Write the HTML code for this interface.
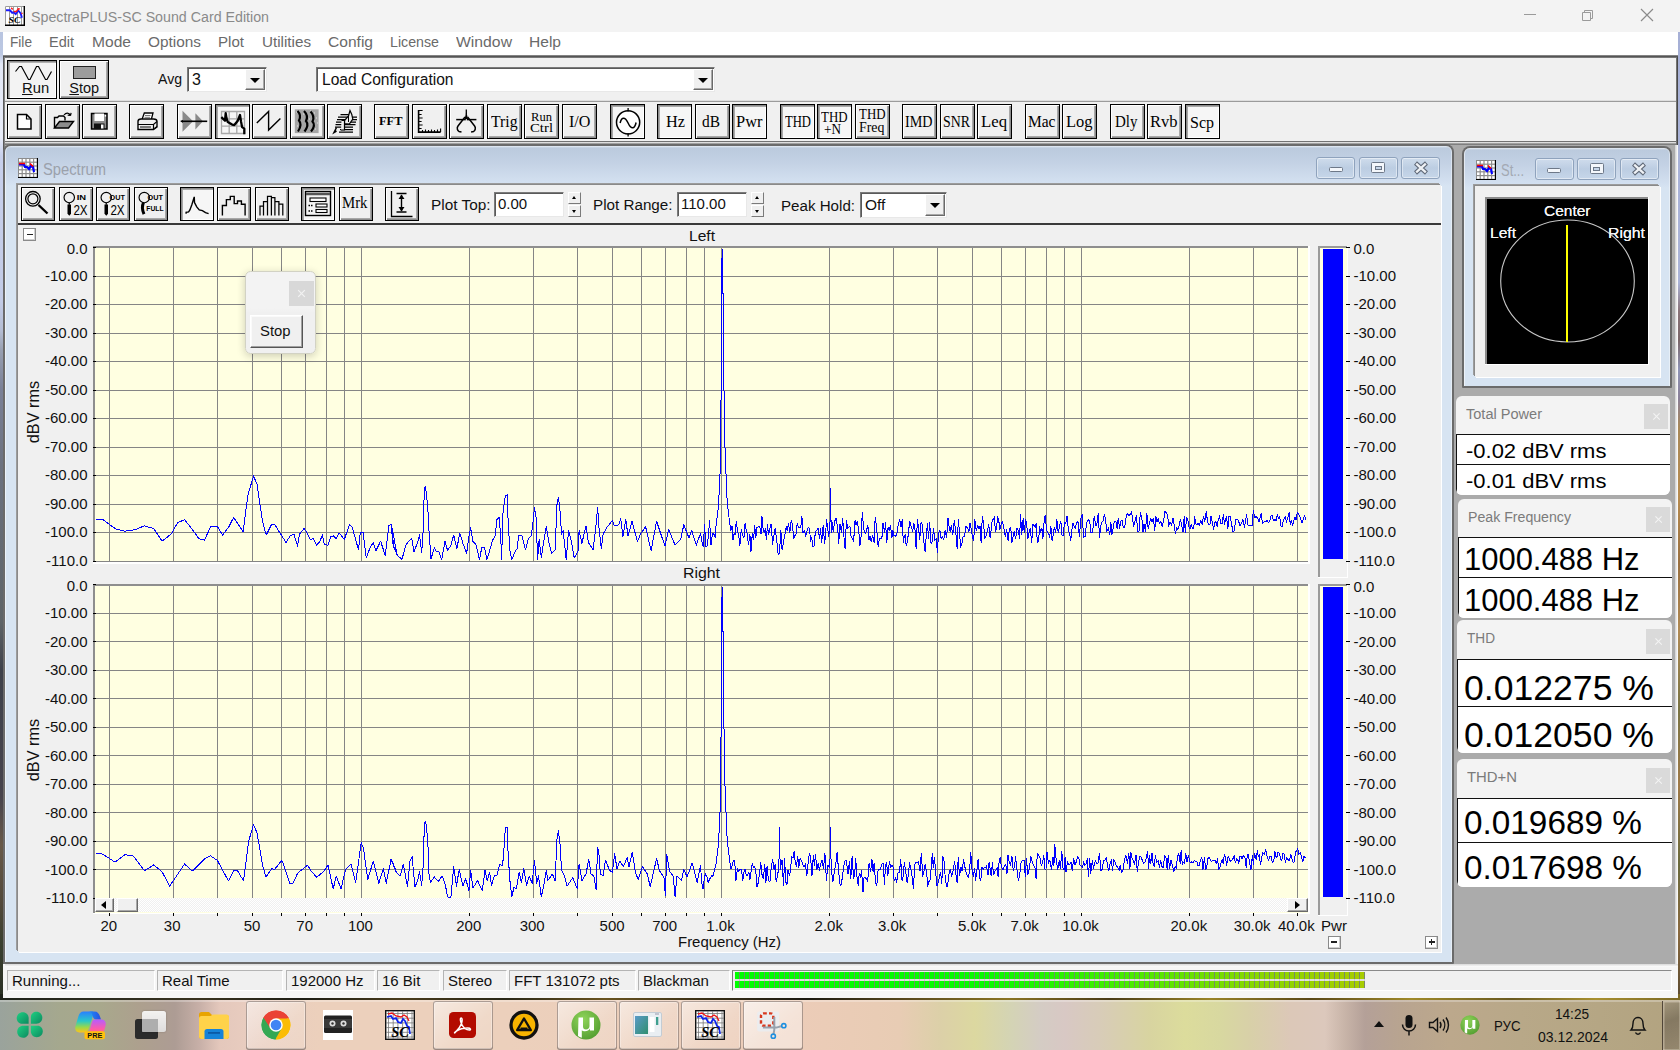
<!DOCTYPE html><html><head><meta charset="utf-8"><title>SpectraPLUS-SC</title><style>
*{margin:0;padding:0;box-sizing:border-box}
html,body{width:1680px;height:1050px;overflow:hidden}
body{position:relative;font-family:"Liberation Sans",sans-serif;background:#2a2a22;color:#000}
.a{position:absolute}
.t{position:absolute;white-space:nowrap;line-height:1}
.sx{display:inline-block;transform-origin:0 50%}
.tb{position:absolute;width:35px;height:35px;border:1px solid #000;background:#f0f0f0;box-shadow:inset 1px 1px 0 #fff,inset -1px -1px 0 #8c8c8c,inset -2px -2px 0 #a8a8a8;font-family:"Liberation Serif",serif;font-size:17px;text-align:center;line-height:32px;color:#000;overflow:hidden}
.tb.p{background:#f6f6f6;box-shadow:inset 1px 1px 0 #8c8c8c,inset 2px 2px 0 #a8a8a8,inset -1px -1px 0 #fff}
.tb svg{position:absolute;left:-1px;top:-1px}
.tb2{line-height:12px;font-size:13.5px;padding-top:3px}
.sb{width:34px;height:34px}
.ax{position:absolute;font-size:15px;line-height:15px;color:#111;white-space:nowrap}
.axr{text-align:right;width:60px}
.inp{position:absolute;background:#fff;border:1px solid #7a7a7a;border-right-color:#e8e8e8;border-bottom-color:#e8e8e8;box-shadow:inset 1px 1px 0 #5a5a5a;font-size:15px;line-height:20px;padding-left:4px;color:#111}
.cap{position:absolute;border:1px solid #8fa3bd;border-radius:3px;background:linear-gradient(#cfdcec,#bccde2 50%,#c6d6e9);box-shadow:inset 0 0 0 1px rgba(255,255,255,.45)}
.pan{position:absolute;background:#f3f3f3;border-radius:6px;overflow:hidden}
.pan .h{position:absolute;left:10px;font-size:15.5px;color:#7b7b7b;line-height:1;white-space:nowrap}
.pan .x{position:absolute;width:24px;height:25px;background:#dadada}
.pan .x:before,.pan .x:after{content:"";position:absolute;left:8px;top:12px;width:9px;height:1.3px;background:#f4f4f4;transform:rotate(45deg)}
.pan .x:after{transform:rotate(-45deg)}
.pan .r{position:absolute;left:0;right:0;background:#fff;border-top:1.5px solid #111;border-left:1.5px solid #111;white-space:nowrap;color:#000;line-height:1}
.sp{position:absolute;height:21px;background:#f0f0f0;border:1px solid #b4b4b4;border-right-color:#fff;border-bottom-color:#fff;font-size:15px;line-height:19.5px;padding-left:4px;color:#111;white-space:nowrap}
.tk{position:absolute;top:1001px;height:49px;width:60px;border-radius:3px;background:linear-gradient(140deg,rgba(255,255,255,.55),rgba(255,255,255,.2) 60%,rgba(255,255,255,.12));box-shadow:inset 0 0 0 1px rgba(110,90,80,.55),inset 0 0 0 2px rgba(255,255,255,.3),inset 0 -2px 0 rgba(90,70,60,.35)}
</style></head><body>
<div class="a" style="left:0;top:30px;width:6px;height:970px;background:linear-gradient(#b8c4e0 0,#bcc8e2 2.500%,#e2e7f6 3.500%,#e8ecf8 11%,#c8d0ec 13%,#c2cbe6 28%,#b4bdd4 31%,#98a0b2 33%,#7a8198 37%,#6c7280 45%,#5e6468 61%,#3e424c 66%,#46444e 79%,#685a4a 84%,#52493b 90%,#3a4030 94%,#2a3024 100%)"></div>
<div class="a" style="left:1674px;top:30px;width:6px;height:970px;background:linear-gradient(#a6b0d6 0,#aab4d8 26%,#8a7478 29%,#7a6668 32%,#8e94b6 35%,#8a8098 38%,#a88858 41%,#b88c50 48%,#9a7040 55%,#b08a54 62%,#7a7444 70%,#a07a48 78%,#6a6a3c 86%,#8a6a40 93%,#5a4a30 100%)"></div>
<div class="a" style="left:0;top:994px;width:1680px;height:8px;background:linear-gradient(90deg,#20241c 0,#2c2c20 6%,#3a3420 12%,#1e1e16 18%,#4a3c1c 24%,#2a2818 30%,#6a5420 36%,#3a3018 42%,#1c1a12 48%,#5a4a1e 54%,#8a7424 60%,#4a3c18 66%,#9a8428 72%,#5a4818 78%,#a08a2a 84%,#6a5a20 90%,#a89030 95%,#7a6824 100%)"></div>
<div class="a" style="left:0;top:0;width:1680px;height:32px;background:#f3f3f3"></div>
<div class="a" style="left:3px;top:32px;width:1675px;height:24px;background:#fff"></div>
<div class="a" style="left:3px;top:55px;width:1675px;height:942px;background:#f0f0f0"></div>
<div class="a" style="left:3px;top:55px;width:1675px;height:3px;background:linear-gradient(#9a9a9a,#555 50%,#8a8a8a)"></div>
<div class="a" style="left:3px;top:57px;width:2px;height:907px;background:linear-gradient(90deg,#444,#999)"></div>
<div class="a" style="left:1676px;top:57px;width:2px;height:88px;background:linear-gradient(90deg,#888,#333)"></div>
<div class="a" style="left:5px;top:100px;width:1671px;height:2px;background:linear-gradient(#fff,#7a7a7a)"></div>
<div class="a" style="left:5px;top:142px;width:1671px;height:824px;background:#ababab"></div>
<div class="a" style="left:5px;top:141px;width:1671px;height:4px;background:linear-gradient(#3c3c3c,#e8e8e8 40%,#888 70%,#777)"></div>
<div class="a" style="left:1675px;top:145px;width:3px;height:822px;background:linear-gradient(90deg,#cfcfcf,#fff)"></div>
<div class="a" style="left:3px;top:964px;width:1675px;height:33.500px;background:#f6f6f6"></div>
<div class="a" style="left:5px;top:964px;width:1673px;height:3px;background:linear-gradient(#d8d8d8,#fff)"></div>
<svg class="a" style="left:5px;top:6px" width="20" height="20" viewBox="0 0 20 20">
<rect x="0" y="0" width="20" height="20" fill="#fff"/>
<path d="M0.500 0.500h19M0.500 0.500v19M4.500 1v18M8.500 1v18M12.500 1v18M16.500 1v18" stroke="#9c9c9c" stroke-width="1"/>
<path d="M19.300 0v19.300h-19.300" stroke="#000" stroke-width="1.400" fill="none"/>
<path d="M1 4.300h4l2.200 2.600l1.500-0.600l2 1.800l2.500-3.600l2.500 3l1.200 4.200" stroke="#1a1aff" stroke-width="1.900" fill="none"/>
<path d="M6.200 1.800l1.500 1.800M8.800 5.600h2.500l2-2.700l1.500 0.200M16.800 6.800l0.500 1" stroke="#ff1a1a" stroke-width="1.500" fill="none"/>
<text x="9.500" y="17.300" font-family="Liberation Serif,serif" font-style="italic" font-weight="bold" font-size="8.500" text-anchor="middle" fill="#000" textLength="12" lengthAdjust="spacingAndGlyphs">SC</text>
</svg>
<div class="t" style="left:31px;top:9px;font-size:15.5px;color:#8a8a8a;font-family:&quot;Liberation Sans&quot;,sans-serif;"><span class="sx" style="transform:scaleX(0.9177)">SpectraPLUS-SC Sound Card Edition</span></div>
<svg class="a" style="left:1500px;top:0" width="180" height="32" viewBox="0 0 180 32" fill="none" stroke="#9a9a9a" stroke-width="1">
<path d="M24 14.5h12"/>
<path d="M82.5 12.5h8v8h-8z"/><path d="M84.5 12.5v-2h8v8h-2"/>
<path d="M141 9l12 12M153 9l-12 12" stroke="#8a8a8a" stroke-width="1.15"/>
</svg>
<div class="t" style="left:10px;top:34px;font-size:15.5px;color:#6a6a6a;font-family:&quot;Liberation Sans&quot;,sans-serif;"><span class="sx" style="transform:scaleX(0.8809)">File</span></div>
<div class="t" style="left:49px;top:34px;font-size:15.5px;color:#6a6a6a;font-family:&quot;Liberation Sans&quot;,sans-serif;"><span class="sx" style="transform:scaleX(0.9360)">Edit</span></div>
<div class="t" style="left:92px;top:34px;font-size:15.5px;color:#6a6a6a;font-family:&quot;Liberation Sans&quot;,sans-serif;"><span class="sx" style="transform:scaleX(1.0059)">Mode</span></div>
<div class="t" style="left:148px;top:34px;font-size:15.5px;color:#6a6a6a;font-family:&quot;Liberation Sans&quot;,sans-serif;"><span class="sx" style="transform:scaleX(0.9922)">Options</span></div>
<div class="t" style="left:218px;top:34px;font-size:15.5px;color:#6a6a6a;font-family:&quot;Liberation Sans&quot;,sans-serif;"><span class="sx" style="transform:scaleX(0.9735)">Plot</span></div>
<div class="t" style="left:262px;top:34px;font-size:15.5px;color:#6a6a6a;font-family:&quot;Liberation Sans&quot;,sans-serif;"><span class="sx" style="transform:scaleX(0.9810)">Utilities</span></div>
<div class="t" style="left:328px;top:34px;font-size:15.5px;color:#6a6a6a;font-family:&quot;Liberation Sans&quot;,sans-serif;"><span class="sx" style="transform:scaleX(1.0044)">Config</span></div>
<div class="t" style="left:390px;top:34px;font-size:15.5px;color:#6a6a6a;font-family:&quot;Liberation Sans&quot;,sans-serif;"><span class="sx" style="transform:scaleX(0.9172)">License</span></div>
<div class="t" style="left:456px;top:34px;font-size:15.5px;color:#6a6a6a;font-family:&quot;Liberation Sans&quot;,sans-serif;"><span class="sx" style="transform:scaleX(1.0158)">Window</span></div>
<div class="t" style="left:529px;top:34px;font-size:15.5px;color:#6a6a6a;font-family:&quot;Liberation Sans&quot;,sans-serif;"><span class="sx" style="transform:scaleX(1.0038)">Help</span></div>
<div class="a" style="left:7px;top:60px;width:50px;height:39px;border:1px solid #000;background:#f3f3f3;box-shadow:inset 1px 1px 0 #8c8c8c,inset 2px 2px 0 #b0b0b0,inset -1px -1px 0 #fff"></div>
<svg class="a" style="left:7px;top:60px" width="50" height="39" viewBox="0 0 50 39" fill="none" stroke="#000" stroke-width="1.2"><path d="M8.5 11.5 L12.5 6.5 L14.5 6.5 L21.5 19.5 L23 19.5 L29.5 6.5 L31.5 6.5 L38.5 19.5 L40 19.5 L44.5 11.5"/></svg>
<div class="t" style="left:21.500px;top:81.400px;font-size:14.500px;color:#111"><span class="sx" style="transform:scaleX(1.02)"><span style="text-decoration:underline">R</span>un</span></div>
<div class="a" style="left:59px;top:60px;width:50px;height:39px;border:1px solid #000;background:#f0f0f0;box-shadow:inset 1px 1px 0 #fff,inset -1px -1px 0 #8c8c8c,inset -2px -2px 0 #a8a8a8"></div>
<div class="a" style="left:73px;top:66px;width:23px;height:13px;border:1px solid #222;background:#9c9c9c"></div>
<div class="t" style="left:69.300px;top:81.400px;font-size:14.500px;color:#111"><span class="sx" style="transform:scaleX(1.0)"><span style="text-decoration:underline">S</span>top</span></div>

<div class="t" style="left:158px;top:71px;font-size:15.5px;color:#111;font-family:&quot;Liberation Sans&quot;,sans-serif;"><span class="sx" style="transform:scaleX(0.9081)">Avg</span></div>
<div class="t" style="left:321.5px;top:72px;font-size:16px;color:#111;font-family:&quot;Liberation Sans&quot;,sans-serif;z-index:3;"><span class="sx" style="transform:scaleX(0.9725)">Load Configuration</span></div>
<div class="inp" style="left:187px;top:67px;width:80px;height:25px;line-height:23px;font-size:16px">3</div>
<div class="a" style="left:245px;top:69px;width:20px;height:21px;background:#f0f0f0;border:1px solid #fff;border-right-color:#6a6a6a;border-bottom-color:#6a6a6a;box-shadow:inset -1px -1px 0 #a8a8a8"></div>
<div class="a" style="left:250px;top:78px;border:5px solid transparent;border-top:5px solid #000;border-bottom:0"></div>
<div class="inp" style="left:316px;top:67px;width:399px;height:25px"></div>
<div class="a" style="left:693px;top:69px;width:20px;height:21px;background:#f0f0f0;border:1px solid #fff;border-right-color:#6a6a6a;border-bottom-color:#6a6a6a;box-shadow:inset -1px -1px 0 #a8a8a8"></div>
<div class="a" style="left:698px;top:78px;border:5px solid transparent;border-top:5px solid #000;border-bottom:0"></div>

<div class="tb" style="left:7px;top:104px"><svg width="35" height="35" viewBox="0 0 35 35" fill="none" stroke="#000" stroke-width="1.3"><path d="M10.5 10.5h9l4.5 4.5v10h-13.5z" fill="#fff" stroke-width="1.5"/><path d="M19.5 10.5v4.5h4.5" stroke-width="1.2"/></svg></div>
<div class="tb" style="left:44.5px;top:104px"><svg width="35" height="35" viewBox="0 0 35 35" fill="none" stroke="#000" stroke-width="1.3"><path d="M9.5 24v-10.5h3l1.5-1.5h4.5l1.5 1.5v3" stroke-width="1.4"/><path d="M9.5 24l5-6.5h14l-5 6.5z" fill="#8c8c8c" stroke-width="1.4"/><path d="M19 11c2-2.5 5-2.500 6.500 0.500M25.5 11.500l-2.800-0.300M25.500 11.500l0.600-2.600" stroke-width="1.2"/></svg></div>
<div class="tb" style="left:82px;top:104px"><svg width="35" height="35" viewBox="0 0 35 35" fill="none" stroke="#000" stroke-width="1.3"><path d="M9.5 9.500h15.500v15.500h-15.500z" fill="#8c8c8c" stroke-width="1.5"/><rect x="12.500" y="9.500" width="9.500" height="7.500" fill="#fff" stroke="none"/><rect x="12" y="19.500" width="10.500" height="5.500" fill="#111" stroke="none"/><rect x="19" y="20.500" width="2.500" height="4" fill="#fff" stroke="none"/><rect x="22.800" y="11" width="1.300" height="1.600" fill="#fff" stroke="none"/></svg></div>
<div class="tb" style="left:129px;top:104px"><svg width="35" height="35" viewBox="0 0 35 35" fill="none" stroke="#000" stroke-width="1.3"><path d="M13 15.500l2.300-6.500h8.700l-1.700 6.500" fill="#fff" stroke-width="1.300"/><path d="M16 11.500h5.500M15.500 13.300h5.500" stroke="#777" stroke-width="1"/><path d="M9 17.500c0-1.500 1.500-2.500 3-2.500h12.500c2 0 3.500 1 3.500 2.500v5.500l-3.500 2.500h-15.500z" fill="#f0f0f0" stroke-width="1.400"/><path d="M9 20.500h15.500l3.500-3M24.500 20.500v5" stroke-width="1.200"/><path d="M11 23h11" stroke="#555" stroke-width="1.500"/><path d="M25.500 24.500l2.500-2" stroke-width="1.200"/></svg></div>
<div class="tb" style="left:177px;top:104px"><svg width="35" height="35" viewBox="0 0 35 35" fill="none" stroke="#000" stroke-width="1.3"><path d="M5.500 6.700l10.500 10.600l-10.500 10.500z" fill="#8a8a8a" stroke="none"/><path d="M18.400 9.200l7.500 8.100l-7.500 8.100z" fill="#8a8a8a" stroke="none"/><path d="M3.700 17.300h26.500" stroke-width="1.600"/><path d="M4 17.300l2-1.600v3.200z" fill="#000" stroke="none"/></svg></div>
<div class="tb p" style="left:214.5px;top:104px"><svg width="35" height="35" viewBox="0 0 35 35" fill="none" stroke="#000" stroke-width="1.3"><path d="M6.500 7.500h23v22h-23zM14.200 7.500v22M21.800 7.500v22M6.500 14.800h23M6.500 22.200h23" stroke="#a8a8a8" stroke-width="1.300"/><path d="M6.300 13.200l3.700 3.500l0.700-7.500l0.700 4.600l1.400 4.300l4.300 2.500l2.200 0.400l3.500-4.300l2.200-5.700l1 6.400l1.100 5.700l2.200 1.500v5.700" stroke-width="2.300" stroke-linejoin="round"/></svg></div>
<div class="tb" style="left:252px;top:104px"><svg width="35" height="35" viewBox="0 0 35 35" fill="none" stroke="#000" stroke-width="1.3"><path d="M4.800 19l11.800-11.600v18.600l11.800-11.600" stroke-width="1.400"/></svg></div>
<div class="tb" style="left:289.5px;top:104px"><svg width="35" height="35" viewBox="0 0 35 35" fill="none" stroke="#000" stroke-width="1.3"><rect x="4.800" y="5.300" width="23.800" height="23.800" fill="#a6a6a6" stroke="none"/><path d="M6 8h1M9 12h1M24 9h1M26 14h1M22 20h1M25 25h1M7 22h1M14 26h1M20 7h1M13 10h1M19 15h1M27 19h1" stroke="#e4e4e4" stroke-width="1.200"/><path d="M7.500 7c3.500 3.500 3 6.500 1.500 9.500c2.500 3 2 6.500-1 11M14 7c3.500 3.500 3.500 7 2 10c2.500 3 1.500 6.500-1.500 10.500M20.500 7.500c3.500 3.500 3.500 7 2 10c2.500 3 1.500 6.500-1.500 10" stroke-width="2.200"/></svg></div>
<div class="tb" style="left:327px;top:104px"><svg width="35" height="35" viewBox="0 0 35 35" fill="none" stroke="#000" stroke-width="1.3"><path d="M13.500 10.500h10M11 13h19M10 15.500h20M9 18h20M8.500 20.500h20M8 23h18M13 25.500h13M12 28h14" stroke-width="1.250"/><path d="M17.500 19.500v-3l4-4.500l1.500-5.500l1.800 4l1 4.500l-3.500 5z" fill="#f0f0f0" stroke-width="1.200"/><path d="M14.500 16.500l3 0v9.500h-3.500" fill="#f0f0f0" stroke-width="1.200"/><path d="M9.500 23.500l-2.500 5l2.500-1.500" stroke-width="1.500"/><path d="M21.500 12v6" stroke-width="1"/></svg></div>
<div class="tb" style="left:374px;top:104px"></div><div class="t" style="left:379.3px;top:113.8px;font-size:13.5px;color:#000;font-family:&quot;Liberation Serif&quot;,serif;font-weight:bold;"><span class="sx" style="transform:scaleX(0.9177)">FFT</span></div>
<div class="tb" style="left:411.5px;top:104px"><svg width="35" height="35" viewBox="0 0 35 35" fill="none" stroke="#000" stroke-width="1.3"><path d="M6.600 6v22.100h22" stroke-width="1.600"/><path d="M6.600 6.500h4M6.600 10.500h3M6.600 14h4M6.600 17.500h3M6.600 21h4M6.600 24.500h3M10.500 28v-2M13.500 28v-2.500M16.500 28v-2M19.500 28v-2.500M22.500 28v-2M25.500 28v-2.500M28.600 28v-3.500" stroke-width="1.100"/></svg></div>
<div class="tb" style="left:449px;top:104px"><svg width="35" height="35" viewBox="0 0 35 35" fill="none" stroke="#000" stroke-width="1.3"><path d="M17.300 5.500v5" stroke-width="1.300"/><path d="M17.300 8l-2 8h4z" fill="#000" stroke="none"/><path d="M7.200 15.600h20.200" stroke-width="1.500"/><path d="M16 13l-7 9c-1.500 2.200-0.500 4.500 1 5.500l2.500 0.400M18.600 13l7 9c1.500 2.200 0.500 4.500-1 5.500l-2.500 0.400" stroke-width="1.500"/><path d="M17.300 15v4" stroke="#f0f0f0" stroke-width="1"/></svg></div>
<div class="tb" style="left:486.5px;top:104px"></div><div class="t" style="left:490.5px;top:114.03399999999999px;font-size:16.6px;color:#000;font-family:&quot;Liberation Serif&quot;,serif;"><span class="sx" style="transform:scaleX(0.9465)">Trig</span></div>
<div class="tb" style="left:524px;top:104px"></div><div class="t" style="left:531px;top:109.7px;font-size:13.3px;color:#000;font-family:&quot;Liberation Serif&quot;,serif;"><span class="sx" style="transform:scaleX(0.9472)">Run</span></div><div class="t" style="left:530px;top:121px;font-size:13.3px;color:#000;font-family:&quot;Liberation Serif&quot;,serif;"><span class="sx" style="transform:scaleX(1.1116)">Ctrl</span></div>
<div class="tb" style="left:561.5px;top:104px"></div><div class="t" style="left:568.5px;top:114.03399999999999px;font-size:16.6px;color:#000;font-family:&quot;Liberation Serif&quot;,serif;"><span class="sx" style="transform:scaleX(0.9716)">I/O</span></div>
<div class="tb p" style="left:609.5px;top:104px"><svg width="35" height="35" viewBox="0 0 35 35" fill="none" stroke="#000" stroke-width="1.3"><circle cx="18.100" cy="18.300" r="11.600" fill="#fff" stroke-width="1.500"/><path d="M18.100 4v3.500M18.100 29v3.500" stroke-width="1.300"/><path d="M10.100 19c1.500-6.500 5-6.500 8 0s6.500 6.500 8-0.500" stroke-width="1.500"/></svg></div>
<div class="tb p" style="left:657px;top:104px"></div><div class="t" style="left:666px;top:114.03399999999999px;font-size:16.6px;color:#000;font-family:&quot;Liberation Serif&quot;,serif;"><span class="sx" style="transform:scaleX(0.9816)">Hz</span></div>
<div class="tb" style="left:694.5px;top:104px"></div><div class="t" style="left:702px;top:114.03399999999999px;font-size:16.6px;color:#000;font-family:&quot;Liberation Serif&quot;,serif;"><span class="sx" style="transform:scaleX(0.9292)">dB</span></div>
<div class="tb p" style="left:732px;top:104px"></div><div class="t" style="left:736px;top:114.03399999999999px;font-size:16.6px;color:#000;font-family:&quot;Liberation Serif&quot;,serif;"><span class="sx" style="transform:scaleX(0.9907)">Pwr</span></div>
<div class="tb p" style="left:779.5px;top:104px"></div><div class="t" style="left:785px;top:114.238px;font-size:16.2px;color:#000;font-family:&quot;Liberation Serif&quot;,serif;"><span class="sx" style="transform:scaleX(0.7809)">THD</span></div>
<div class="tb p" style="left:817px;top:104px"></div><div class="t" style="left:821px;top:109.5px;font-size:15px;color:#000;font-family:&quot;Liberation Serif&quot;,serif;"><span class="sx" style="transform:scaleX(0.8596)">THD</span></div><div class="t" style="left:824px;top:122px;font-size:15px;color:#000;font-family:&quot;Liberation Serif&quot;,serif;"><span class="sx" style="transform:scaleX(0.8812)">+N</span></div>
<div class="tb" style="left:854.5px;top:104px"></div><div class="t" style="left:858.5px;top:106.5px;font-size:15px;color:#000;font-family:&quot;Liberation Serif&quot;,serif;"><span class="sx" style="transform:scaleX(0.8596)">THD</span></div><div class="t" style="left:858.5px;top:119.5px;font-size:15px;color:#000;font-family:&quot;Liberation Serif&quot;,serif;"><span class="sx" style="transform:scaleX(0.9274)">Freq</span></div>
<div class="tb" style="left:902px;top:104px"></div><div class="t" style="left:905px;top:114.238px;font-size:16.2px;color:#000;font-family:&quot;Liberation Serif&quot;,serif;"><span class="sx" style="transform:scaleX(0.8731)">IMD</span></div>
<div class="tb" style="left:939.5px;top:104px"></div><div class="t" style="left:942.5px;top:114.238px;font-size:16.2px;color:#000;font-family:&quot;Liberation Serif&quot;,serif;"><span class="sx" style="transform:scaleX(0.8568)">SNR</span></div>
<div class="tb" style="left:977px;top:104px"></div><div class="t" style="left:981px;top:114.03399999999999px;font-size:16.6px;color:#000;font-family:&quot;Liberation Serif&quot;,serif;"><span class="sx" style="transform:scaleX(1.0074)">Leq</span></div>
<div class="tb" style="left:1024.5px;top:104px"></div><div class="t" style="left:1027.5px;top:114.03399999999999px;font-size:16.6px;color:#000;font-family:&quot;Liberation Serif&quot;,serif;"><span class="sx" style="transform:scaleX(0.9323)">Mac</span></div>
<div class="tb" style="left:1062px;top:104px"></div><div class="t" style="left:1066px;top:114.03399999999999px;font-size:16.6px;color:#000;font-family:&quot;Liberation Serif&quot;,serif;"><span class="sx" style="transform:scaleX(0.9910)">Log</span></div>
<div class="tb" style="left:1109.5px;top:104px"></div><div class="t" style="left:1115px;top:114.03399999999999px;font-size:16.6px;color:#000;font-family:&quot;Liberation Serif&quot;,serif;"><span class="sx" style="transform:scaleX(0.9036)">Dly</span></div>
<div class="tb" style="left:1147px;top:104px"></div><div class="t" style="left:1150px;top:114.03399999999999px;font-size:16.6px;color:#000;font-family:&quot;Liberation Serif&quot;,serif;"><span class="sx" style="transform:scaleX(0.9938)">Rvb</span></div>
<div class="tb p" style="left:1184.5px;top:104px"></div><div class="t" style="left:1190px;top:115.03399999999999px;font-size:16.6px;color:#000;font-family:&quot;Liberation Serif&quot;,serif;"><span class="sx" style="transform:scaleX(0.9639)">Scp</span></div>
<div class="a" style="left:3px;top:144px;width:1451px;height:820px;border-radius:8px 8px 1px 1px;background:#6b6b6b"></div><div class="a" style="left:5px;top:146px;width:1447px;height:816px;border-radius:6px 6px 0 0;background:linear-gradient(#e6edf6 0,#bbcadd 2px,#c3d1e4 16px,#d3e0f0 36px,#d7e4f2 40px,#d7e4f2 100%);box-shadow:inset 1px 0 0 rgba(255,255,255,.55),inset -1px 0 0 rgba(255,255,255,.4)"></div><div class="a" style="left:18px;top:185px;width:1423px;height:767px;background:#f0f0f0;box-shadow:-1px -1px 0 #8a8a8a,-2px -2px 0 #9c9c9c,1px 1px 0 #fff"></div>
<svg class="a" style="left:18px;top:158px" width="20" height="20" viewBox="0 0 20 20">
<rect x="0" y="0" width="20" height="20" fill="#8c8c8c"/>
<g fill="#fff"><rect x="1.0" y="1.0" width="2.6" height="2.6"/><rect x="1.0" y="4.8" width="2.6" height="2.6"/><rect x="1.0" y="8.6" width="2.6" height="2.6"/><rect x="1.0" y="12.4" width="2.6" height="2.6"/><rect x="1.0" y="16.2" width="2.6" height="2.6"/><rect x="4.8" y="1.0" width="2.6" height="2.6"/><rect x="4.8" y="4.8" width="2.6" height="2.6"/><rect x="4.8" y="8.6" width="2.6" height="2.6"/><rect x="4.8" y="12.4" width="2.6" height="2.6"/><rect x="4.8" y="16.2" width="2.6" height="2.6"/><rect x="8.6" y="1.0" width="2.6" height="2.6"/><rect x="8.6" y="4.8" width="2.6" height="2.6"/><rect x="8.6" y="8.6" width="2.6" height="2.6"/><rect x="8.6" y="12.4" width="2.6" height="2.6"/><rect x="8.6" y="16.2" width="2.6" height="2.6"/><rect x="12.4" y="1.0" width="2.6" height="2.6"/><rect x="12.4" y="4.8" width="2.6" height="2.6"/><rect x="12.4" y="8.6" width="2.6" height="2.6"/><rect x="12.4" y="12.4" width="2.6" height="2.6"/><rect x="12.4" y="16.2" width="2.6" height="2.6"/><rect x="16.2" y="1.0" width="2.6" height="2.6"/><rect x="16.2" y="4.8" width="2.6" height="2.6"/><rect x="16.2" y="8.6" width="2.6" height="2.6"/><rect x="16.2" y="12.4" width="2.6" height="2.6"/><rect x="16.2" y="16.2" width="2.6" height="2.6"/></g>
<path d="M19.500 0v19.500h-19.500" stroke="#000" stroke-width="1.2" fill="none"/>
<path d="M1 6.500h5l1 2.500h2l2 2 2-3 2 1 1 5" stroke="#0000ff" stroke-width="2.200" fill="none"/>
<path d="M1 5.500h6M12 5.500l3 3" stroke="#ff0000" stroke-width="1.600" fill="none"/>
</svg>
<div class="t" style="left:43px;top:161.5px;font-size:16px;color:#9ba1ab;font-family:&quot;Liberation Sans&quot;,sans-serif;"><span class="sx" style="transform:scaleX(0.9201)">Spectrum</span></div>
<div class="cap" style="left:1316.0px;top:157px;width:39px;height:22px"></div><div class="cap" style="left:1358.5px;top:157px;width:39px;height:22px"></div><div class="cap" style="left:1401.0px;top:157px;width:39px;height:22px"></div><div class="a" style="left:1328.5px;top:167px;width:14px;height:5px;border:1px solid #6d7888;border-radius:1.500px;background:#f4f7fb"></div><div class="a" style="left:1371.0px;top:162px;width:14px;height:11px;border:1px solid #6d7888;border-radius:1.500px;background:#f4f7fb"></div><div class="a" style="left:1374.5px;top:165.5px;width:7px;height:4px;border:1px solid #6d7888;background:#c6d5e8"></div><svg class="a" style="left:1412.5px;top:161px" width="16" height="14" viewBox="0 0 16 14"><path d="M2.500 2l11 10M13.500 2l-11 10" stroke="#5f6877" stroke-width="4.400" stroke-linecap="butt"/><path d="M3.200 2.700l9.600 8.600M12.800 2.700l-9.600 8.600" stroke="#eef1f5" stroke-width="2.300"/></svg>
<div class="tb sb" style="left:21px;top:187px"><svg width="34" height="34" viewBox="0 0 34 34" fill="none" stroke="#000" stroke-width="1.3" font-family="Liberation Sans,sans-serif"><circle cx="11.9" cy="11.800" r="7.300" stroke-width="1.300"/><circle cx="11.9" cy="11.800" r="5" stroke-width="1.200"/><path d="M17.500 18l9 8.500" stroke-width="2.400"/></svg></div>
<div class="tb sb" style="left:58.5px;top:187px"><svg width="34" height="34" viewBox="0 0 34 34" fill="none" stroke="#000" stroke-width="1.3" font-family="Liberation Sans,sans-serif"><circle cx="10.25" cy="10.500" r="5.200" stroke-width="1.150"/><path d="M10.250 15.700v2" stroke-width="1.300"/><path d="M8.500 17.400h3.500v9.300l-1.750 2l-1.750-2z" fill="#000" stroke="none"/><text x="17.7" y="13.2" font-size="7.3" font-weight="bold" fill="#000" stroke="none" textLength="9.4" lengthAdjust="spacingAndGlyphs">IN</text><text x="14.4" y="28.1" font-size="14.6" font-weight="normal" fill="#000" stroke="none" textLength="14.2" lengthAdjust="spacingAndGlyphs">2X</text></svg></div>
<div class="tb sb" style="left:96px;top:187px"><svg width="34" height="34" viewBox="0 0 34 34" fill="none" stroke="#000" stroke-width="1.3" font-family="Liberation Sans,sans-serif"><circle cx="10.25" cy="10.500" r="5.200" stroke-width="1.150"/><path d="M10.250 15.700v2" stroke-width="1.300"/><path d="M8.500 17.400h3.500v9.300l-1.750 2l-1.750-2z" fill="#000" stroke="none"/><text x="13.6" y="13.2" font-size="7.3" font-weight="bold" fill="#000" stroke="none" textLength="15.4" lengthAdjust="spacingAndGlyphs">OUT</text><text x="14.4" y="28.1" font-size="14.6" font-weight="normal" fill="#000" stroke="none" textLength="14.2" lengthAdjust="spacingAndGlyphs">2X</text></svg></div>
<div class="tb sb" style="left:133.5px;top:187px"><svg width="34" height="34" viewBox="0 0 34 34" fill="none" stroke="#000" stroke-width="1.3" font-family="Liberation Sans,sans-serif"><circle cx="10.25" cy="10.500" r="5.200" stroke-width="1.150"/><path d="M9.500 15.700c-1.500 3-1.500 7 0.500 11.500" stroke-width="3"/><text x="13.6" y="13.2" font-size="7.3" font-weight="bold" fill="#000" stroke="none" textLength="15.4" lengthAdjust="spacingAndGlyphs">OUT</text><text x="12.3" y="24.3" font-size="8" font-weight="bold" fill="#000" stroke="none" textLength="17.2" lengthAdjust="spacingAndGlyphs">FULL</text></svg></div>
<div class="tb sb p" style="left:179.5px;top:187px"><svg width="34" height="34" viewBox="0 0 34 34" fill="none" stroke="#000" stroke-width="1.3" font-family="Liberation Sans,sans-serif"><path d="M6.100 26.750v-1.500l2.500-0.400l1.300-1.900l1.850-5l2.500-8.100l0.250 5.600l2.250 4.400l2.500 3.100l3.150 0.600l3.100 2.150l3.100 1" stroke-width="1.400"/></svg></div>
<div class="tb sb" style="left:217px;top:187px"><svg width="34" height="34" viewBox="0 0 34 34" fill="none" stroke="#000" stroke-width="1.3" font-family="Liberation Sans,sans-serif"><path d="M5.400 28.400V18.500H9.400V12.600H13.300V9.400H17.200V16.600H20.500V14H24.400V17.200H28.100V28.400" stroke-width="1.400"/></svg></div>
<div class="tb sb" style="left:254.5px;top:187px"><svg width="34" height="34" viewBox="0 0 34 34" fill="none" stroke="#000" stroke-width="1.3" font-family="Liberation Sans,sans-serif"><path d="M5 28.400V19.200H8.500V28.400M8.500 19.200V14.600H12.500V28.400M12.500 14.600V9.400H16.400V28.400M16.400 10.700H19.900V28.400M19.900 14.600H23.900V28.400M23.900 17.200H27.800V28.400" stroke-width="1.250"/></svg></div>
<div class="tb sb p" style="left:301px;top:187px"><svg width="34" height="34" viewBox="0 0 34 34" fill="none" stroke="#000" stroke-width="1.3" font-family="Liberation Sans,sans-serif"><rect x="4.500" y="4.500" width="25" height="24" fill="#f4f4f4" stroke-width="1.400"/><path d="M5 7h24" stroke-width="2.500" stroke="#555"/><rect x="9" y="11" width="16" height="3.500" fill="#fff" stroke-width="1.100"/><rect x="15" y="17" width="11" height="3" fill="#fff" stroke-width="1.100"/><rect x="15" y="22.500" width="11" height="3" fill="#fff" stroke-width="1.100"/><path d="M7.500 18.500h5M7.500 24h5" stroke-width="1.400" stroke-dasharray="1.500 1"/></svg></div>
<div class="tb sb" style="left:338.5px;top:187px"></div>
<div class="t" style="left:342.3px;top:195.185px;font-size:16.5px;color:#000;font-family:&quot;Liberation Serif&quot;,serif;"><span class="sx" style="transform:scaleX(0.8974)">Mrk</span></div>
<div class="tb sb" style="left:384.5px;top:187px"><svg width="34" height="34" viewBox="0 0 34 34" fill="none" stroke="#000" stroke-width="1.3" font-family="Liberation Sans,sans-serif"><path d="M6.500 4v25.500h21" stroke-width="1.300"/><path d="M11.500 6.500h10M11.500 25h10" stroke-width="1.700"/><path d="M16.500 8v16" stroke-width="1.400"/><path d="M16.500 7.500l-3 4.500h6zM16.500 24.500l-3-4.500h6z" fill="#000" stroke="none"/></svg></div>
<div class="a" style="left:18px;top:222.5px;width:1423px;height:2px;background:#3a3a3a"></div>
<div class="t" style="left:430.5px;top:197px;font-size:15.5px;color:#111;font-family:&quot;Liberation Sans&quot;,sans-serif;"><span class="sx" style="transform:scaleX(0.9911)">Plot Top:</span></div>
<div class="inp" style="left:494px;top:192px;width:70px;height:25px;line-height:22px;font-size:15px;padding-left:3px">0.00</div>
<div class="t" style="left:593px;top:197px;font-size:15.5px;color:#111;font-family:&quot;Liberation Sans&quot;,sans-serif;"><span class="sx" style="transform:scaleX(0.9815)">Plot Range:</span></div>
<div class="inp" style="left:677px;top:192px;width:70px;height:25px;line-height:22px;font-size:15px;padding-left:3px">110.00</div>
<div class="a" style="left:568px;top:192px;width:13px;height:12px;background:#f0f0f0;border:1px solid #fff;border-right-color:#7a7a7a;border-bottom-color:#7a7a7a"></div><div class="a" style="left:568px;top:205px;width:13px;height:12px;background:#f0f0f0;border:1px solid #fff;border-right-color:#7a7a7a;border-bottom-color:#7a7a7a"></div>
<div class="a" style="left:571.5px;top:196px;border:2.500px solid transparent;border-bottom:3px solid #000;border-top:0"></div><div class="a" style="left:571.5px;top:210px;border:2.500px solid transparent;border-top:3px solid #000;border-bottom:0"></div>
<div class="a" style="left:751px;top:192px;width:13px;height:12px;background:#f0f0f0;border:1px solid #fff;border-right-color:#7a7a7a;border-bottom-color:#7a7a7a"></div><div class="a" style="left:751px;top:205px;width:13px;height:12px;background:#f0f0f0;border:1px solid #fff;border-right-color:#7a7a7a;border-bottom-color:#7a7a7a"></div>
<div class="a" style="left:754.5px;top:196px;border:2.500px solid transparent;border-bottom:3px solid #000;border-top:0"></div><div class="a" style="left:754.5px;top:210px;border:2.500px solid transparent;border-top:3px solid #000;border-bottom:0"></div>
<div class="t" style="left:781px;top:198px;font-size:15.5px;color:#111;font-family:&quot;Liberation Sans&quot;,sans-serif;"><span class="sx" style="transform:scaleX(0.9760)">Peak Hold:</span></div>
<div class="inp" style="left:860px;top:192px;width:87px;height:26px;line-height:23px;font-size:15.500px">Off</div>
<div class="a" style="left:925px;top:194px;width:20px;height:22px;background:#f0f0f0;border:1px solid #fff;border-right-color:#6a6a6a;border-bottom-color:#6a6a6a;box-shadow:inset -1px -1px 0 #a8a8a8"></div>
<div class="a" style="left:930px;top:203px;border:5px solid transparent;border-top:5px solid #000;border-bottom:0"></div>
<div class="a" style="left:93px;top:246px;width:1217px;height:317.5px;background:#fff"></div><div class="a" style="left:93px;top:246px;width:1215px;height:316px;background:#8e8e8e"></div><div class="a" style="left:95px;top:248px;width:1213px;height:314px;background:#ffffe1"></div>
<div class="a" style="left:93px;top:584px;width:1217px;height:330.0px;background:#fff"></div><div class="a" style="left:93px;top:584px;width:1215px;height:328.5px;background:#8e8e8e"></div><div class="a" style="left:95px;top:586px;width:1213px;height:326.5px;background:#ffffe1"></div>
<svg class="a" style="left:0;top:0" width="1680" height="1050" viewBox="0 0 1680 1050" shape-rendering="crispEdges" fill="none"><path d="M109.5 248V562M173.5 248V562M217.5 248V562M252.5 248V562M281.5 248V562M305.5 248V562M326.5 248V562M344.5 248V562M361.5 248V562M469.5 248V562M533.5 248V562M577.5 248V562M612.5 248V562M641.5 248V562M665.5 248V562M686.5 248V562M704.5 248V562M721.5 248V562M829.5 248V562M893.5 248V562M937.5 248V562M972.5 248V562M1001.5 248V562M1025.5 248V562M1046.5 248V562M1064.5 248V562M1081.5 248V562M1189.5 248V562M1253.5 248V562M1297.5 248V562M95 276.5H1308M95 304.5H1308M95 333.5H1308M95 361.5H1308M95 390.5H1308M95 418.5H1308M95 447.5H1308M95 475.5H1308M95 504.5H1308M95 532.5H1308M95 561.5H1308" stroke="#858585" stroke-width="1"/><path d="M93 247.5h3M93 276.5h3M93 304.5h3M93 333.5h3M93 361.5h3M93 390.5h3M93 418.5h3M93 447.5h3M93 475.5h3M93 504.5h3M93 532.5h3M93 561.5h3" stroke="#000" stroke-width="1"/><path d="M109.5 586V898M173.5 586V898M217.5 586V898M252.5 586V898M281.5 586V898M305.5 586V898M326.5 586V898M344.5 586V898M361.5 586V898M469.5 586V898M533.5 586V898M577.5 586V898M612.5 586V898M641.5 586V898M665.5 586V898M686.5 586V898M704.5 586V898M721.5 586V898M829.5 586V898M893.5 586V898M937.5 586V898M972.5 586V898M1001.5 586V898M1025.5 586V898M1046.5 586V898M1064.5 586V898M1081.5 586V898M1189.5 586V898M1253.5 586V898M1297.5 586V898M95 613.5H1308M95 641.5H1308M95 670.5H1308M95 698.5H1308M95 727.5H1308M95 755.5H1308M95 784.5H1308M95 812.5H1308M95 841.5H1308M95 869.5H1308M95 898.5H1308" stroke="#858585" stroke-width="1"/><path d="M93 584.5h3M93 613.5h3M93 641.5h3M93 670.5h3M93 698.5h3M93 727.5h3M93 755.5h3M93 784.5h3M93 812.5h3M93 841.5h3M93 869.5h3M93 898.5h3" stroke="#000" stroke-width="1"/><path d="M95.5,519.0 95.5,519.0 102.0,519.0 110.3,525.2 115.8,528.9 125.1,531.2 135.2,529.7 144.4,525.8 153.7,528.6 162.0,541.1 171.2,534.1 177.6,522.7 184.5,519.7 192.4,529.5 198.9,538.7 204.4,540.2 210.9,526.2 217.3,526.2 222.5,535.0 228.4,527.6 233.6,517.5 243.2,531.7 247.8,495.4 253.5,476.0 257.0,484.3 262.5,521.2 266.2,535.0 271.8,524.0 274.5,524.0 280.1,533.2 286.0,542.4 290.2,536.0 293.9,534.1 297.6,546.1 299.4,534.1 304.0,528.6 306.8,532.3 310.5,539.6 313.3,538.7 316.6,545.2 319.7,541.5 322.5,535.0 324.3,544.3 328.0,545.2 330.8,536.9 333.6,536.0 336.3,538.7 339.1,532.8 344.3,539.6 349.3,524.9 352.0,526.7 358.5,549.8 360.3,532.3 363.1,532.3 366.2,558.1 369.6,548.9 373.2,542.4 376.0,550.7 380.6,541.1 385.2,555.3 388.9,525.8 391.3,524.0 392.6,543.3 397.2,555.3 391.8,526.7 393.7,547.0 398.3,556.2 402.0,559.5 405.7,545.2 408.5,541.5 411.8,538.7 414.0,551.6 417.7,542.4 419.5,535.0 421.7,552.6 423.2,530.4 424.1,497.2 425.1,486.1 426.2,491.7 427.8,508.3 429.1,532.3 431.0,559.0 434.3,547.9 436.5,551.6 438.9,551.6 441.7,559.5 445.0,541.1 447.6,550.7 450.9,545.2 453.7,535.0 456.8,548.9 459.8,533.2 462.9,543.3 466.6,553.5 469.3,534.1 470.6,527.6 473.0,541.5 475.8,544.3 479.5,559.5 481.7,547.9 484.5,547.9 486.9,559.5 489.6,550.7 492.4,540.6 495.2,536.0 497.0,519.3 499.2,517.5 500.7,536.0 501.6,559.5 502.9,513.8 505.3,495.4 507.4,495.0 508.1,521.2 509.9,550.7 511.8,559.5 515.5,550.7 517.3,548.9 518.6,535.0 521.9,536.0 525.6,549.8 528.4,538.7 531.2,536.0 532.5,526.7 534.5,507.4 536.1,517.5 537.6,559.5 539.1,539.6 541.3,557.2 544.1,539.6 546.3,526.7 548.7,541.5 551.5,553.5 555.1,549.8 557.0,504.6 558.3,497.2 559.8,508.3 561.6,534.1 563.1,530.4 566.2,559.5 568.6,530.4 571.8,543.3 574.2,558.1 578.2,550.7 579.1,530.4 581.9,543.3 586.0,525.8 588.4,542.4 593.0,549.8 595.7,528.6 597.6,507.4 598.9,526.7 601.3,548.9 603.1,534.1 606.8,527.6 612.4,520.3 614.2,525.8 618.8,524.9 620.7,518.4 622.9,536.9 625.8,519.3 628.0,536.0 632.1,521.2 637.3,541.5 641.0,533.2 645.6,526.7 651.1,550.7 656.6,521.2 660.3,532.3 664.9,546.1 668.6,529.5 675.1,545.2 680.6,539.6 683.8,524.9 688.9,537.8 691.7,530.4 696.3,545.2 700.5,533.4 701.8,540.8 703.2,546.9 704.6,524.9 705.9,546.8 706.9,546.8 708.4,536.6 709.6,520.4 711.0,545.2 712.4,533.4 713.9,534.2 715.4,537.9 715.8,527.7 718.3,507.3 719.9,479.0 720.8,438.1 721.4,334.3 722.1,249.4 722.7,293.5 723.3,293.5 723.6,334.3 724.0,390.9 724.6,394.1 725.2,472.7 726.2,474.3 727.1,501.0 729.3,519.9 730.9,530.9 732.0,525.7 733.0,539.6 734.1,533.5 735.1,535.0 736.2,521.8 737.3,529.0 738.8,536.5 739.9,545.9 741.2,529.6 742.5,535.4 744.0,537.6 745.1,523.1 746.1,529.3 747.2,533.6 748.5,544.7 749.9,534.3 751.0,551.6 752.3,533.5 753.6,539.1 754.6,525.8 755.9,537.4 756.9,527.7 758.3,526.8 759.8,526.3 761.1,534.0 762.0,516.4 763.2,529.9 764.2,533.0 765.3,528.9 766.4,539.8 767.4,524.9 768.6,534.5 770.1,527.7 771.1,524.0 772.6,544.5 773.7,536.4 775.2,528.3 776.7,539.9 778.1,554.3 779.5,553.0 780.8,530.2 782.1,549.9 783.4,543.1 784.7,535.4 786.2,526.7 787.2,530.6 788.5,523.4 789.8,532.5 791.2,520.1 792.5,524.2 793.6,538.6 794.9,535.2 795.9,535.0 797.2,523.1 798.4,527.2 799.5,527.1 800.8,527.5 801.9,516.5 803.0,533.0 804.5,530.5 805.8,536.2 807.3,530.2 808.5,527.1 809.6,528.7 810.5,541.3 811.7,537.6 812.9,546.7 814.1,545.7 815.4,531.3 816.9,530.5 818.0,528.3 819.5,538.9 820.5,528.9 821.7,542.7 823.2,525.0 824.5,543.1 825.4,537.4 826.5,519.6 827.5,526.8 828.6,536.2 829.9,529.7 830.5,488.3 831.2,532.5 831.9,520.7 833.2,531.4 834.7,521.1 836.1,518.2 837.6,527.3 838.7,543.2 840.0,524.3 841.4,532.4 842.7,518.6 844.0,537.4 845.1,548.6 846.4,520.4 847.7,528.8 848.7,527.1 849.9,526.0 851.2,537.6 852.5,538.4 853.6,541.5 855.1,519.8 856.1,525.0 857.1,521.3 858.7,529.3 859.9,546.0 861.1,535.8 862.3,512.7 863.7,528.7 865.1,533.6 866.4,530.9 867.9,525.0 869.0,540.0 870.0,536.2 871.2,541.3 872.6,535.7 874.1,542.3 875.2,517.5 876.6,527.6 878.1,546.5 879.5,538.3 880.8,538.6 881.9,538.1 883.0,522.6 884.5,532.4 885.6,522.6 886.8,543.1 888.1,526.8 889.2,530.2 890.4,525.1 891.9,537.7 892.8,530.0 893.9,535.7 895.3,536.1 896.8,535.0 898.2,524.7 899.7,519.7 901.0,526.9 902.2,519.5 903.3,542.3 904.2,536.7 905.3,534.9 906.2,545.7 907.6,540.5 908.7,529.7 909.9,521.3 911.2,526.8 912.7,531.7 913.8,523.2 915.1,530.9 916.1,548.4 917.4,519.0 918.4,527.2 919.8,539.2 921.1,522.2 922.2,524.7 923.7,540.4 925.1,551.5 926.3,535.4 927.5,523.5 928.5,538.5 929.7,522.4 931.0,543.4 932.2,541.7 933.6,528.3 934.7,540.6 936.1,538.6 937.4,552.1 938.6,532.3 939.9,530.5 941.1,538.6 942.5,536.9 943.7,539.9 945.1,530.1 946.6,537.9 948.0,518.4 949.1,526.9 950.2,532.0 951.3,525.4 952.8,535.0 954.3,520.1 955.8,532.8 957.2,548.8 958.3,519.8 959.6,533.4 960.6,547.5 961.9,543.8 963.0,537.1 964.6,536.4 965.9,526.4 967.4,528.0 968.9,531.4 970.0,522.6 971.4,529.5 972.4,537.0 973.7,540.7 974.8,519.9 976.3,530.5 977.6,525.5 978.9,528.9 980.0,526.3 981.2,543.1 982.3,516.5 983.4,522.1 984.8,538.6 986.4,535.1 987.4,530.7 988.8,524.4 990.1,538.2 991.1,530.0 992.3,519.6 993.4,519.8 994.4,516.4 995.4,531.4 996.4,529.5 997.6,516.5 998.9,521.7 999.9,529.4 1001.3,524.1 1002.6,521.3 1003.9,528.7 1005.4,536.7 1006.6,529.0 1008.1,540.6 1009.3,529.5 1010.8,527.4 1011.8,542.6 1013.1,536.1 1014.1,531.7 1015.6,538.7 1017.1,527.8 1018.1,529.9 1019.6,538.8 1020.6,514.1 1021.7,534.3 1023.2,518.6 1024.2,532.7 1025.6,519.1 1026.7,523.6 1027.9,538.9 1029.0,532.8 1030.3,528.3 1031.7,543.0 1032.8,524.1 1034.0,525.5 1035.3,527.9 1036.3,523.2 1037.3,542.8 1038.6,540.9 1039.6,526.9 1040.7,532.4 1041.9,528.3 1042.9,538.5 1044.4,517.6 1045.4,515.7 1046.5,530.4 1047.5,532.1 1048.5,533.3 1049.6,537.5 1050.9,526.2 1052.1,541.1 1053.4,534.2 1054.3,527.3 1055.7,532.5 1056.8,519.0 1058.2,533.0 1059.6,525.7 1060.9,521.5 1062.0,535.0 1063.2,535.3 1064.5,522.4 1065.7,523.5 1067.0,516.4 1068.4,530.2 1069.8,535.1 1070.8,540.5 1071.8,530.3 1073.0,522.9 1074.1,526.2 1075.2,528.2 1076.7,522.5 1078.0,521.7 1079.4,536.7 1080.9,518.0 1082.2,514.6 1083.6,537.1 1085.2,536.7 1086.4,524.1 1087.5,520.5 1088.7,519.9 1089.8,521.5 1090.8,532.6 1092.1,533.1 1093.2,526.8 1094.2,516.5 1095.7,525.6 1096.6,526.0 1098.2,513.8 1099.6,537.9 1100.5,527.7 1101.5,522.6 1102.9,521.4 1104.4,514.1 1105.6,520.2 1106.9,531.7 1108.3,527.8 1109.8,534.6 1110.9,522.3 1111.9,534.7 1113.1,528.8 1114.2,521.5 1115.8,521.0 1117.1,528.4 1118.3,518.0 1119.6,528.4 1121.1,520.6 1122.1,520.1 1123.3,527.6 1124.6,527.7 1125.9,518.3 1127.3,513.2 1128.8,515.8 1130.2,514.5 1131.5,511.5 1132.6,519.1 1133.6,526.8 1135.1,520.2 1136.5,515.8 1137.7,531.6 1139.1,530.8 1140.4,512.0 1141.8,518.0 1143.0,531.8 1144.1,523.8 1145.5,531.7 1146.8,513.0 1148.2,528.9 1149.5,522.1 1150.8,518.5 1152.1,522.0 1153.4,518.1 1154.7,530.1 1155.9,516.7 1157.0,522.0 1158.2,518.7 1159.5,523.9 1160.7,521.3 1162.2,526.9 1163.4,521.8 1165.0,511.4 1166.4,512.7 1167.7,516.0 1168.7,526.2 1170.1,522.3 1171.5,525.4 1173.0,518.0 1174.2,525.4 1175.5,533.7 1176.7,527.5 1177.7,529.5 1179.2,525.1 1180.4,519.3 1181.6,524.3 1183.0,531.9 1184.2,516.2 1185.3,532.7 1186.5,517.6 1187.8,519.4 1189.2,528.5 1190.3,528.2 1191.3,524.5 1192.3,528.2 1193.7,528.7 1194.7,516.5 1195.8,523.9 1197.1,525.2 1198.2,522.9 1199.4,525.4 1200.8,520.7 1202.2,524.8 1203.4,516.2 1204.9,521.4 1206.2,511.3 1207.4,520.5 1208.4,524.7 1209.9,524.9 1211.0,515.7 1212.2,521.7 1213.5,529.1 1215.0,521.7 1216.0,522.4 1217.1,526.3 1218.3,519.9 1219.6,516.0 1220.7,523.9 1222.1,523.8 1223.4,514.9 1224.5,524.1 1225.4,521.2 1226.5,516.1 1227.9,528.4 1228.9,516.5 1230.3,516.9 1231.8,525.4 1233.0,531.7 1234.3,530.8 1235.7,519.1 1237.0,519.6 1238.4,520.1 1239.9,525.9 1241.4,523.6 1242.9,519.2 1244.4,527.6 1245.6,520.4 1246.5,514.5 1248.0,525.3 1249.2,525.7 1250.4,525.1 1252.0,525.9 1253.3,510.4 1254.8,517.6 1256.2,516.6 1257.4,517.9 1259.0,521.8 1260.2,517.7 1261.2,513.7 1262.4,523.3 1263.7,522.0 1264.8,521.8 1266.0,521.9 1267.1,520.1 1268.2,522.3 1269.6,521.9 1270.7,516.0 1272.2,515.4 1273.6,521.0 1274.9,519.1 1276.2,521.0 1277.2,514.4 1278.8,518.8 1279.8,516.9 1281.0,526.3 1282.0,526.9 1283.0,522.4 1284.4,517.6 1285.4,516.4 1286.5,522.1 1288.0,517.3 1289.1,512.3 1290.3,524.8 1291.3,520.0 1292.7,525.4 1293.6,521.1 1295.0,517.5 1296.2,519.7 1297.2,512.3 1298.5,514.1 1299.6,515.7 1300.6,518.7 1302.1,522.9 1303.2,519.3 1304.5,515.2 1305.7,520.1" stroke="#0000ff" stroke-width="1" stroke-linejoin="round"/><path d="M95.5,853.8 95.5,853.8 102.0,853.8 108.5,857.9 114.9,862.1 125.1,854.7 133.4,856.0 144.4,870.8 153.7,864.9 162.0,871.7 169.7,886.1 184.5,864.0 192.4,871.0 204.4,859.0 210.3,855.7 217.3,860.3 228.4,880.9 233.9,869.9 237.6,870.8 243.5,880.9 248.7,840.9 253.5,824.8 257.0,832.6 262.5,864.9 265.9,877.2 271.8,868.6 274.5,869.5 281.9,860.3 285.6,870.4 289.7,883.3 293.0,883.3 297.6,873.2 302.2,869.5 307.4,865.2 311.4,871.3 316.6,877.2 322.9,872.3 328.0,865.2 333.2,888.9 336.3,876.0 341.0,888.9 345.6,869.5 351.1,864.0 355.7,882.4 361.2,842.7 363.5,848.3 367.7,879.6 373.2,861.2 378.8,883.3 383.4,868.6 386.2,883.3 391.1,859.3 396.3,872.3 390.9,859.3 393.7,864.9 396.5,872.3 400.1,876.0 403.3,864.0 407.5,887.0 409.9,861.2 412.1,856.6 414.9,887.0 417.7,880.6 419.5,871.3 421.7,885.2 423.2,865.8 424.1,833.5 425.1,821.0 426.2,824.3 427.8,840.9 429.1,876.0 430.6,882.4 434.3,876.9 438.3,881.5 442.2,876.0 445.4,885.2 447.6,897.0 450.9,897.0 453.7,866.7 456.4,886.1 459.2,869.5 462.9,886.1 465.7,878.7 469.0,890.7 470.6,870.4 473.0,887.9 477.6,880.6 482.3,890.7 485.0,870.4 487.2,880.6 489.6,872.3 491.5,885.2 494.3,876.0 497.0,875.0 499.8,864.0 502.6,865.8 504.4,842.7 505.3,828.0 507.4,827.6 508.1,853.8 509.9,880.6 511.8,897.0 514.0,887.0 516.4,888.9 519.2,872.3 521.4,882.4 523.8,868.6 526.5,885.2 529.3,876.0 532.1,883.3 534.5,860.3 536.7,883.3 538.5,876.0 541.3,897.0 544.1,883.3 546.3,870.4 547.8,880.6 552.4,874.1 555.1,880.6 557.0,839.0 558.3,830.7 559.8,840.9 561.6,870.4 564.4,876.0 567.1,886.1 572.7,877.8 577.3,888.9 579.1,864.0 581.9,880.6 586.0,874.1 588.7,859.3 591.1,874.1 593.9,876.0 596.1,889.8 597.6,847.4 598.9,853.8 600.4,874.1 603.1,876.0 605.5,860.3 609.6,870.4 612.4,872.3 614.6,853.8 617.0,868.6 619.7,861.2 623.4,866.7 627.1,857.5 629.0,866.7 632.3,852.0 635.4,872.3 638.2,879.6 642.4,866.7 647.4,874.1 650.2,887.0 656.6,858.4 659.4,870.4 664.0,877.8 665.3,895.3 666.8,854.7 669.6,871.3 673.2,876.0 675.1,897.0 676.9,876.0 681.5,880.6 683.8,869.5 687.1,876.9 692.2,863.0 697.2,882.4 700.5,865.4 701.8,883.3 703.0,889.0 704.4,877.9 705.4,873.9 706.9,876.9 708.3,882.7 709.6,878.7 710.7,878.4 711.7,875.1 712.8,876.8 713.9,872.8 715.0,867.7 715.8,865.7 718.3,845.3 719.9,817.0 720.8,776.1 721.4,672.3 722.1,587.4 722.7,631.5 723.3,631.5 723.6,672.3 724.0,728.9 724.6,732.1 725.2,810.7 726.2,812.3 727.1,839.0 729.3,857.9 730.9,868.9 732.0,866.1 733.4,861.0 734.7,860.1 735.9,880.9 737.4,868.5 738.5,871.4 740.0,869.2 741.5,870.0 742.8,880.3 744.1,871.2 745.2,869.2 746.2,874.7 747.4,875.7 748.9,872.2 749.9,879.8 751.2,870.4 752.3,863.2 753.5,867.4 754.7,866.8 755.8,870.7 756.9,887.0 758.4,882.3 759.7,871.7 760.8,862.8 761.9,874.2 763.3,878.5 764.8,864.1 765.9,882.6 767.1,865.8 768.4,879.9 769.9,882.0 771.1,868.7 772.6,859.0 774.1,869.9 775.1,864.4 776.1,881.9 777.6,875.1 778.9,867.2 779.5,827.2 780.2,870.0 782.0,859.8 783.5,886.0 784.6,858.8 785.8,882.2 787.0,884.7 788.0,870.4 789.4,875.6 790.5,870.8 791.6,856.4 793.1,858.1 794.1,851.6 795.1,861.0 796.4,866.1 797.8,856.5 798.7,867.7 800.1,858.2 801.5,860.8 802.5,863.4 804.0,867.1 805.4,863.7 806.8,875.7 808.1,863.0 809.4,853.4 810.5,856.2 812.0,875.7 813.3,855.5 814.4,865.5 815.5,854.8 816.9,869.7 818.1,863.1 819.4,870.2 820.6,864.6 822.0,860.1 823.5,868.3 824.9,853.4 826.4,880.2 828.0,865.1 829.1,867.5 829.9,867.2 830.5,827.2 831.2,870.0 832.9,881.3 834.4,871.5 835.8,863.8 837.1,851.9 838.5,869.7 840.0,884.0 841.0,885.4 842.5,876.7 843.8,865.6 845.3,860.3 846.5,861.0 848.0,874.4 849.4,861.1 850.8,879.0 852.1,856.0 853.6,878.9 854.8,873.1 855.7,858.2 857.2,879.5 858.3,885.9 859.2,873.9 860.4,877.5 861.6,871.0 863.0,891.9 864.1,877.2 865.4,877.2 866.7,879.9 867.7,881.3 869.1,862.9 870.6,871.7 872.0,859.5 873.1,871.5 874.1,863.3 875.6,882.7 876.8,885.4 877.9,871.7 878.9,868.9 880.3,869.4 881.8,864.3 883.3,863.1 884.4,884.1 885.6,864.6 886.6,862.7 887.9,875.4 889.4,861.3 890.8,867.7 892.0,865.4 893.0,866.8 894.2,881.0 895.6,877.1 896.6,882.7 898.1,872.6 899.3,873.0 900.8,859.4 901.7,879.2 902.7,880.1 904.3,862.7 905.7,871.6 907.1,883.0 908.1,876.7 909.5,862.9 910.9,869.2 912.0,875.7 913.4,888.9 914.8,864.6 916.0,862.4 917.4,863.0 918.5,861.6 920.0,871.3 921.3,853.6 922.8,876.2 924.0,871.5 925.2,864.1 926.6,872.9 927.8,886.2 929.0,881.4 930.2,879.6 931.2,867.5 932.3,853.7 933.3,867.5 934.3,857.0 935.5,868.5 936.7,886.0 937.9,883.9 939.0,879.3 940.5,872.1 941.8,883.1 942.9,856.8 944.0,861.2 945.5,881.0 947.0,886.6 948.0,882.3 949.4,871.1 950.4,869.1 951.7,876.6 953.1,870.9 954.6,861.0 955.9,874.2 957.1,882.5 958.2,857.9 959.5,875.1 961.0,867.5 962.1,871.2 963.6,859.9 964.8,866.6 966.1,872.5 967.3,875.9 968.6,877.1 969.8,867.8 970.8,852.5 971.8,868.2 973.3,876.5 974.6,868.8 975.7,880.2 977.0,869.0 978.2,858.9 979.6,878.0 980.8,880.2 981.9,867.0 983.3,870.0 984.3,867.3 985.5,867.5 986.6,865.9 988.0,875.4 989.1,861.8 990.2,868.8 991.2,875.9 992.4,862.7 993.6,874.4 994.8,871.6 996.1,869.6 997.2,867.9 998.1,877.0 999.1,861.3 1000.1,857.6 1001.5,866.7 1002.9,870.2 1004.5,866.2 1005.7,864.1 1007.0,873.5 1008.0,854.7 1009.2,862.1 1010.5,865.1 1011.9,856.2 1013.2,870.4 1014.5,866.2 1015.6,856.7 1017.1,871.1 1018.4,881.0 1019.8,873.8 1021.0,862.7 1022.2,860.4 1023.3,860.7 1024.2,860.5 1025.3,876.8 1026.5,858.7 1027.9,874.8 1029.4,868.7 1030.8,856.3 1032.3,861.9 1033.7,865.6 1035.0,867.6 1036.1,878.4 1037.3,853.2 1038.8,856.0 1039.7,856.3 1041.3,865.5 1042.3,863.7 1043.8,855.1 1045.0,869.2 1046.0,868.9 1047.0,851.9 1048.5,863.5 1049.9,860.2 1051.5,869.4 1053.0,856.8 1053.9,865.9 1054.8,844.8 1056.3,860.9 1057.7,869.7 1059.2,860.4 1060.3,868.6 1061.9,851.6 1062.9,867.7 1064.0,869.9 1065.1,856.8 1066.0,872.3 1067.4,861.8 1068.7,864.2 1069.8,864.1 1071.0,862.2 1072.2,870.7 1073.7,858.2 1075.1,865.0 1076.5,861.3 1077.6,856.6 1078.8,858.2 1080.0,865.1 1081.1,866.0 1082.5,867.9 1083.5,862.0 1084.8,865.3 1086.0,864.5 1087.3,858.6 1088.4,876.7 1089.7,858.2 1090.8,873.2 1092.3,860.4 1093.5,868.7 1094.5,862.8 1095.7,860.8 1096.9,864.2 1098.1,863.0 1099.5,853.1 1100.8,871.1 1102.2,869.2 1103.7,860.3 1105.2,860.0 1106.3,857.9 1107.6,866.0 1108.9,870.9 1110.0,864.2 1111.4,859.6 1112.5,870.5 1113.9,859.5 1115.0,862.3 1116.5,866.0 1117.8,867.7 1119.1,870.3 1120.1,865.3 1121.7,872.8 1123.1,869.9 1124.4,860.6 1125.9,855.0 1127.4,863.4 1128.8,853.0 1129.9,868.5 1130.9,852.6 1131.9,857.4 1132.9,859.8 1134.4,864.2 1136.0,854.7 1137.3,871.9 1138.7,861.3 1139.8,856.2 1140.9,856.7 1142.1,859.7 1143.4,863.3 1144.7,862.7 1146.2,858.5 1147.6,851.2 1148.6,869.0 1149.5,855.9 1150.7,863.2 1152.0,852.7 1153.1,864.3 1154.3,866.6 1155.3,855.7 1156.8,862.7 1158.3,860.2 1159.3,867.1 1160.7,860.8 1161.9,866.5 1163.2,867.4 1164.7,855.8 1166.0,857.5 1167.2,869.3 1168.2,855.7 1169.6,868.9 1171.1,859.8 1172.4,866.2 1173.9,871.5 1175.2,866.4 1176.3,868.4 1177.4,857.1 1178.8,853.7 1180.2,863.3 1181.1,850.6 1182.3,864.2 1183.4,862.3 1184.5,863.6 1185.7,853.3 1187.0,861.7 1188.5,855.2 1190.1,862.8 1191.4,861.7 1192.8,863.1 1194.3,860.4 1195.5,861.7 1197.0,861.7 1198.0,866.0 1199.2,865.3 1200.5,859.9 1201.9,857.3 1202.9,869.6 1204.4,857.7 1205.8,869.7 1207.1,864.7 1208.1,857.9 1209.1,857.8 1210.1,858.9 1211.3,861.3 1212.3,860.9 1213.8,860.9 1214.9,860.0 1216.4,863.4 1217.6,859.0 1218.8,869.7 1219.9,867.3 1220.9,863.8 1222.2,859.4 1223.2,863.4 1224.3,854.4 1225.3,856.4 1226.6,865.3 1228.1,856.5 1229.4,859.1 1230.4,861.3 1231.8,860.4 1232.8,858.9 1234.3,855.6 1235.3,863.0 1236.7,858.9 1237.8,859.7 1238.8,863.8 1239.8,856.7 1241.0,856.2 1242.1,858.9 1243.4,855.5 1244.9,857.6 1246.3,867.8 1247.2,855.2 1248.3,854.3 1249.5,862.0 1251.0,869.5 1252.3,855.9 1253.5,864.5 1254.5,853.1 1256.1,859.5 1257.3,850.6 1258.3,856.1 1259.3,854.5 1260.4,864.7 1261.9,856.9 1262.9,852.7 1264.3,854.6 1265.8,849.9 1267.4,857.3 1268.4,860.1 1269.9,856.6 1271.2,856.2 1272.4,862.7 1273.8,860.7 1274.8,851.5 1275.9,856.5 1276.9,857.8 1277.9,852.5 1279.4,853.4 1280.7,859.4 1281.8,860.4 1283.0,853.0 1284.3,854.5 1285.3,862.6 1286.6,857.9 1288.0,859.5 1289.3,860.9 1290.9,854.1 1292.1,859.8 1293.1,862.2 1294.5,861.9 1295.4,852.0 1296.4,851.6 1297.8,848.8 1298.9,854.4 1300.3,852.7 1301.4,856.9 1302.7,861.9 1304.0,856.2 1305.0,857.4 1306.1,857.6" stroke="#0000ff" stroke-width="1" stroke-linejoin="round"/><path d="M109.5 913v3M173.5 913v3M217.5 913v3M252.5 913v3M281.5 913v3M305.5 913v3M326.5 913v3M344.5 913v3M361.5 913v3M469.5 913v3M533.5 913v3M577.5 913v3M612.5 913v3M641.5 913v3M665.5 913v3M686.5 913v3M704.5 913v3M721.5 913v3M829.5 913v3M893.5 913v3M937.5 913v3M972.5 913v3M1001.5 913v3M1025.5 913v3M1046.5 913v3M1064.5 913v3M1081.5 913v3M1189.5 913v3M1253.5 913v3M1297.5 913v3" stroke="#000" stroke-width="1.3"/></svg>
<div class="a" style="left:95px;top:898px;width:1213px;height:14px;background:#f6f6f6;background-image:linear-gradient(45deg,#fff 25%,transparent 25%,transparent 75%,#fff 75%),linear-gradient(45deg,#fff 25%,transparent 25%,transparent 75%,#fff 75%);background-size:2px 2px;background-position:0 0,1px 1px;background-color:#f0f0f0"></div>
<div class="a" style="left:95px;top:898px;width:19px;height:14px;background:#f0f0f0;border:1px solid #fff;border-right-color:#6a6a6a;border-bottom-color:#6a6a6a;box-shadow:inset -1px -1px 0 #a8a8a8"></div>
<div class="a" style="left:117px;top:898px;width:21px;height:14px;background:#f0f0f0;border:1px solid #fff;border-right-color:#6a6a6a;border-bottom-color:#6a6a6a;box-shadow:inset -1px -1px 0 #a8a8a8"></div>
<div class="a" style="left:1287px;top:898px;width:21px;height:14px;background:#f0f0f0;border:1px solid #fff;border-right-color:#6a6a6a;border-bottom-color:#6a6a6a;box-shadow:inset -1px -1px 0 #a8a8a8"></div>
<div class="a" style="left:101px;top:901px;border:4px solid transparent;border-right:5px solid #000;border-left:0"></div>
<div class="a" style="left:1295px;top:901px;border:4px solid transparent;border-left:5px solid #000;border-right:0"></div>
<div class="ax axr" style="left:27.500px;top:240.6px">0.0</div>
<div class="ax" style="left:1353.500px;top:241.4px">0.0</div>
<div class="ax axr" style="left:27.500px;top:267.6px">-10.00</div>
<div class="ax" style="left:1353.500px;top:267.6px">-10.00</div>
<div class="ax axr" style="left:27.500px;top:296.1px">-20.00</div>
<div class="ax" style="left:1353.500px;top:296.1px">-20.00</div>
<div class="ax axr" style="left:27.500px;top:324.6px">-30.00</div>
<div class="ax" style="left:1353.500px;top:324.6px">-30.00</div>
<div class="ax axr" style="left:27.500px;top:353.1px">-40.00</div>
<div class="ax" style="left:1353.500px;top:353.1px">-40.00</div>
<div class="ax axr" style="left:27.500px;top:381.6px">-50.00</div>
<div class="ax" style="left:1353.500px;top:381.6px">-50.00</div>
<div class="ax axr" style="left:27.500px;top:410.1px">-60.00</div>
<div class="ax" style="left:1353.500px;top:410.1px">-60.00</div>
<div class="ax axr" style="left:27.500px;top:438.6px">-70.00</div>
<div class="ax" style="left:1353.500px;top:438.6px">-70.00</div>
<div class="ax axr" style="left:27.500px;top:467.1px">-80.00</div>
<div class="ax" style="left:1353.500px;top:467.1px">-80.00</div>
<div class="ax axr" style="left:27.500px;top:495.6px">-90.00</div>
<div class="ax" style="left:1353.500px;top:495.6px">-90.00</div>
<div class="ax axr" style="left:27.500px;top:524.1px">-100.0</div>
<div class="ax" style="left:1353.500px;top:524.1px">-100.0</div>
<div class="ax axr" style="left:27.500px;top:552.6px">-110.0</div>
<div class="ax" style="left:1353.500px;top:552.6px">-110.0</div>
<div class="ax axr" style="left:27.500px;top:578.0px">0.0</div>
<div class="ax" style="left:1353.500px;top:578.8px">0.0</div>
<div class="ax axr" style="left:27.500px;top:605.0px">-10.00</div>
<div class="ax" style="left:1353.500px;top:605.0px">-10.00</div>
<div class="ax axr" style="left:27.500px;top:633.5px">-20.00</div>
<div class="ax" style="left:1353.500px;top:633.5px">-20.00</div>
<div class="ax axr" style="left:27.500px;top:662.0px">-30.00</div>
<div class="ax" style="left:1353.500px;top:662.0px">-30.00</div>
<div class="ax axr" style="left:27.500px;top:690.5px">-40.00</div>
<div class="ax" style="left:1353.500px;top:690.5px">-40.00</div>
<div class="ax axr" style="left:27.500px;top:719.0px">-50.00</div>
<div class="ax" style="left:1353.500px;top:719.0px">-50.00</div>
<div class="ax axr" style="left:27.500px;top:747.5px">-60.00</div>
<div class="ax" style="left:1353.500px;top:747.5px">-60.00</div>
<div class="ax axr" style="left:27.500px;top:776.0px">-70.00</div>
<div class="ax" style="left:1353.500px;top:776.0px">-70.00</div>
<div class="ax axr" style="left:27.500px;top:804.5px">-80.00</div>
<div class="ax" style="left:1353.500px;top:804.5px">-80.00</div>
<div class="ax axr" style="left:27.500px;top:833.0px">-90.00</div>
<div class="ax" style="left:1353.500px;top:833.0px">-90.00</div>
<div class="ax axr" style="left:27.500px;top:861.5px">-100.0</div>
<div class="ax" style="left:1353.500px;top:861.5px">-100.0</div>
<div class="ax axr" style="left:27.500px;top:890.0px">-110.0</div>
<div class="ax" style="left:1353.500px;top:890.0px">-110.0</div>
<div class="a" style="left:1318px;top:246px;width:30px;height:332px;background:#fff"></div>
<div class="a" style="left:1318px;top:246px;width:29px;height:331px;background:#9a9a9a"></div>
<div class="a" style="left:1320px;top:248px;width:26.500px;height:328.500px;background:#f0f0f0"></div>
<div class="a" style="left:1320px;top:248px;width:26.500px;height:311px;background:#ffffe1"></div>
<div class="a" style="left:1323px;top:249px;width:20px;height:310px;background:#0000ff"></div>
<div class="a" style="left:1346px;top:247px;width:3.500px;height:1.300px;background:#000"></div>
<div class="a" style="left:1346px;top:276px;width:3.500px;height:1.300px;background:#000"></div>
<div class="a" style="left:1346px;top:304px;width:3.500px;height:1.300px;background:#000"></div>
<div class="a" style="left:1346px;top:333px;width:3.500px;height:1.300px;background:#000"></div>
<div class="a" style="left:1346px;top:361px;width:3.500px;height:1.300px;background:#000"></div>
<div class="a" style="left:1346px;top:390px;width:3.500px;height:1.300px;background:#000"></div>
<div class="a" style="left:1346px;top:418px;width:3.500px;height:1.300px;background:#000"></div>
<div class="a" style="left:1346px;top:447px;width:3.500px;height:1.300px;background:#000"></div>
<div class="a" style="left:1346px;top:475px;width:3.500px;height:1.300px;background:#000"></div>
<div class="a" style="left:1346px;top:504px;width:3.500px;height:1.300px;background:#000"></div>
<div class="a" style="left:1346px;top:532px;width:3.500px;height:1.300px;background:#000"></div>
<div class="a" style="left:1346px;top:561px;width:3.500px;height:1.300px;background:#000"></div>
<div class="a" style="left:1318px;top:584px;width:30px;height:332px;background:#fff"></div>
<div class="a" style="left:1318px;top:584px;width:29px;height:331px;background:#9a9a9a"></div>
<div class="a" style="left:1320px;top:586px;width:26.500px;height:328.500px;background:#f0f0f0"></div>
<div class="a" style="left:1320px;top:586px;width:26.500px;height:311px;background:#ffffe1"></div>
<div class="a" style="left:1323px;top:587px;width:20px;height:310px;background:#0000ff"></div>
<div class="a" style="left:1346px;top:584px;width:3.500px;height:1.300px;background:#000"></div>
<div class="a" style="left:1346px;top:613px;width:3.500px;height:1.300px;background:#000"></div>
<div class="a" style="left:1346px;top:641px;width:3.500px;height:1.300px;background:#000"></div>
<div class="a" style="left:1346px;top:670px;width:3.500px;height:1.300px;background:#000"></div>
<div class="a" style="left:1346px;top:698px;width:3.500px;height:1.300px;background:#000"></div>
<div class="a" style="left:1346px;top:727px;width:3.500px;height:1.300px;background:#000"></div>
<div class="a" style="left:1346px;top:755px;width:3.500px;height:1.300px;background:#000"></div>
<div class="a" style="left:1346px;top:784px;width:3.500px;height:1.300px;background:#000"></div>
<div class="a" style="left:1346px;top:812px;width:3.500px;height:1.300px;background:#000"></div>
<div class="a" style="left:1346px;top:841px;width:3.500px;height:1.300px;background:#000"></div>
<div class="a" style="left:1346px;top:869px;width:3.500px;height:1.300px;background:#000"></div>
<div class="a" style="left:1346px;top:898px;width:3.500px;height:1.300px;background:#000"></div>
<div class="t" style="left:688.5px;top:227.5px;font-size:15.5px;color:#111;font-family:&quot;Liberation Sans&quot;,sans-serif;"><span class="sx" style="transform:scaleX(1.0057)">Left</span></div>
<div class="t" style="left:682.5px;top:565px;font-size:15.5px;color:#111;font-family:&quot;Liberation Sans&quot;,sans-serif;"><span class="sx" style="transform:scaleX(1.0225)">Right</span></div>
<div class="t" style="left:33.300px;top:411.7px;font-size:16.300px;color:#111;transform:translate(-50%,-50%) rotate(-90deg)">dBV rms</div>
<div class="t" style="left:33.300px;top:749.7px;font-size:16.300px;color:#111;transform:translate(-50%,-50%) rotate(-90deg)">dBV rms</div>
<div class="ax" style="left:68.8px;top:918.300px;width:80px;text-align:center">20</div>
<div class="ax" style="left:132.2px;top:918.300px;width:80px;text-align:center">30</div>
<div class="ax" style="left:212.1px;top:918.300px;width:80px;text-align:center">50</div>
<div class="ax" style="left:264.7px;top:918.300px;width:80px;text-align:center">70</div>
<div class="ax" style="left:320.4px;top:918.300px;width:80px;text-align:center">100</div>
<div class="ax" style="left:428.8px;top:918.300px;width:80px;text-align:center">200</div>
<div class="ax" style="left:492.2px;top:918.300px;width:80px;text-align:center">300</div>
<div class="ax" style="left:572.1px;top:918.300px;width:80px;text-align:center">500</div>
<div class="ax" style="left:624.7px;top:918.300px;width:80px;text-align:center">700</div>
<div class="ax" style="left:680.5px;top:918.300px;width:80px;text-align:center">1.0k</div>
<div class="ax" style="left:788.8px;top:918.300px;width:80px;text-align:center">2.0k</div>
<div class="ax" style="left:852.2px;top:918.300px;width:80px;text-align:center">3.0k</div>
<div class="ax" style="left:932.1px;top:918.300px;width:80px;text-align:center">5.0k</div>
<div class="ax" style="left:984.7px;top:918.300px;width:80px;text-align:center">7.0k</div>
<div class="ax" style="left:1040.5px;top:918.300px;width:80px;text-align:center">10.0k</div>
<div class="ax" style="left:1148.8px;top:918.300px;width:80px;text-align:center">20.0k</div>
<div class="ax" style="left:1212.2px;top:918.300px;width:80px;text-align:center">30.0k</div>
<div class="ax" style="left:1278px;top:918px">40.0k</div>
<div class="t" style="left:1321px;top:917.5px;font-size:15.5px;color:#111;font-family:&quot;Liberation Sans&quot;,sans-serif;"><span class="sx" style="transform:scaleX(0.9740)">Pwr</span></div>
<div class="t" style="left:677.5px;top:933.5px;font-size:15.5px;color:#111;font-family:&quot;Liberation Sans&quot;,sans-serif;"><span class="sx" style="transform:scaleX(0.9644)">Frequency (Hz)</span></div>
<div class="a" style="left:23px;top:228px;width:13px;height:13px;background:#fff;border:1px solid #8a8a8a;box-shadow:inset -1px -1px 0 #d0d0d0"></div><div class="a" style="left:26.5px;top:233.8px;width:6px;height:1.600px;background:#222"></div>
<div class="a" style="left:1327.5px;top:935.5px;width:13px;height:13px;background:#fff;border:1px solid #8a8a8a;box-shadow:inset -1px -1px 0 #d0d0d0"></div><div class="a" style="left:1331.0px;top:941.3px;width:6px;height:1.600px;background:#222"></div>
<div class="a" style="left:1425px;top:935.5px;width:13px;height:13px;background:#fff;border:1px solid #8a8a8a;box-shadow:inset -1px -1px 0 #d0d0d0"></div><div class="a" style="left:1428.5px;top:941.3px;width:6px;height:1.600px;background:#222"></div><div class="a" style="left:1430.7px;top:939.0px;width:1.600px;height:6px;background:#222"></div>
<div class="a" style="left:244.500px;top:271.300px;width:71.500px;height:83px;background:linear-gradient(#f3f3f3 45%,#f0f0f0 50%);border-radius:5.500px;border:1px solid #d2d2c4;box-shadow:0 2px 9px rgba(0,0,0,.2)"></div>
<div class="a" style="left:289px;top:281px;width:25px;height:25px;background:#d8d8d8"></div>
<svg class="a" style="left:289px;top:281px" width="25" height="25" viewBox="0 0 25 25"><path d="M9.200 9.200l6.600 6.600M15.800 9.200l-6.600 6.600" stroke="#f2f2f2" stroke-width="1.200"/></svg>
<div class="a" style="left:250px;top:315px;width:53px;height:33px;background:#f0f0f0;border:1px solid #fff;border-right-color:#555;border-bottom-color:#555;box-shadow:inset -1px -1px 0 #a0a0a0,inset 1px 1px 0 #fafafa"></div>
<div class="t" style="left:260.2px;top:323.2px;font-size:15.5px;color:#111;font-family:&quot;Liberation Sans&quot;,sans-serif;"><span class="sx" style="transform:scaleX(0.9565)">Stop</span></div>
<div class="a" style="left:1462px;top:146px;width:210px;height:242px;border-radius:8px 8px 1px 1px;background:#6b6b6b"></div><div class="a" style="left:1464px;top:148px;width:206px;height:238px;border-radius:6px 6px 0 0;background:linear-gradient(#e6edf6 0,#bbcadd 2px,#c3d1e4 16px,#d3e0f0 36px,#d7e4f2 40px,#d7e4f2 100%);box-shadow:inset 1px 0 0 rgba(255,255,255,.55),inset -1px 0 0 rgba(255,255,255,.4)"></div><div class="a" style="left:1475px;top:186px;width:185px;height:191px;background:#f0f0f0;box-shadow:-1px -1px 0 #8a8a8a,-2px -2px 0 #9c9c9c,1px 1px 0 #fff"></div>
<svg class="a" style="left:1475.5px;top:159.5px" width="20" height="20" viewBox="0 0 20 20">
<rect x="0" y="0" width="20" height="20" fill="#8c8c8c"/>
<g fill="#fff"><rect x="1.0" y="1.0" width="2.6" height="2.6"/><rect x="1.0" y="4.8" width="2.6" height="2.6"/><rect x="1.0" y="8.6" width="2.6" height="2.6"/><rect x="1.0" y="12.4" width="2.6" height="2.6"/><rect x="1.0" y="16.2" width="2.6" height="2.6"/><rect x="4.8" y="1.0" width="2.6" height="2.6"/><rect x="4.8" y="4.8" width="2.6" height="2.6"/><rect x="4.8" y="8.6" width="2.6" height="2.6"/><rect x="4.8" y="12.4" width="2.6" height="2.6"/><rect x="4.8" y="16.2" width="2.6" height="2.6"/><rect x="8.6" y="1.0" width="2.6" height="2.6"/><rect x="8.6" y="4.8" width="2.6" height="2.6"/><rect x="8.6" y="8.6" width="2.6" height="2.6"/><rect x="8.6" y="12.4" width="2.6" height="2.6"/><rect x="8.6" y="16.2" width="2.6" height="2.6"/><rect x="12.4" y="1.0" width="2.6" height="2.6"/><rect x="12.4" y="4.8" width="2.6" height="2.6"/><rect x="12.4" y="8.6" width="2.6" height="2.6"/><rect x="12.4" y="12.4" width="2.6" height="2.6"/><rect x="12.4" y="16.2" width="2.6" height="2.6"/><rect x="16.2" y="1.0" width="2.6" height="2.6"/><rect x="16.2" y="4.8" width="2.6" height="2.6"/><rect x="16.2" y="8.6" width="2.6" height="2.6"/><rect x="16.2" y="12.4" width="2.6" height="2.6"/><rect x="16.2" y="16.2" width="2.6" height="2.6"/></g>
<path d="M19.500 0v19.500h-19.500" stroke="#000" stroke-width="1.2" fill="none"/>
<path d="M1 6.500h5l1 2.500h2l2 2 2-3 2 1 1 5" stroke="#0000ff" stroke-width="2.200" fill="none"/>
<path d="M1 5.500h6M12 5.500l3 3" stroke="#ff0000" stroke-width="1.600" fill="none"/>
</svg>
<div class="t" style="left:1500.5px;top:163px;font-size:16px;color:#a3a9b3;font-family:&quot;Liberation Sans&quot;,sans-serif;"><span class="sx" style="transform:scaleX(0.8084)">St...</span></div>
<div class="cap" style="left:1534.5px;top:158px;width:39px;height:22px"></div><div class="cap" style="left:1577.0px;top:158px;width:39px;height:22px"></div><div class="cap" style="left:1619.5px;top:158px;width:39px;height:22px"></div><div class="a" style="left:1547.0px;top:168px;width:14px;height:5px;border:1px solid #6d7888;border-radius:1.500px;background:#f4f7fb"></div><div class="a" style="left:1589.5px;top:163px;width:14px;height:11px;border:1px solid #6d7888;border-radius:1.500px;background:#f4f7fb"></div><div class="a" style="left:1593.0px;top:166.5px;width:7px;height:4px;border:1px solid #6d7888;background:#c6d5e8"></div><svg class="a" style="left:1631.0px;top:162px" width="16" height="14" viewBox="0 0 16 14"><path d="M2.500 2l11 10M13.500 2l-11 10" stroke="#5f6877" stroke-width="4.400" stroke-linecap="butt"/><path d="M3.200 2.700l9.600 8.600M12.800 2.700l-9.600 8.600" stroke="#eef1f5" stroke-width="2.300"/></svg>
<div class="a" style="left:1485px;top:197px;width:164px;height:168px;background:#fff"></div><div class="a" style="left:1485px;top:197px;width:163px;height:167px;background:#8a8a8a"></div>
<div class="a" style="left:1487px;top:199px;width:160.500px;height:164.500px;background:#000"></div>
<svg class="a" style="left:1487px;top:199px" width="161" height="165" viewBox="1487 199 161 165" fill="none"><ellipse cx="1567.5" cy="281" rx="66.800" ry="61" stroke="#c8c8c8" stroke-width="1.100"/><path d="M1567 225v117" stroke="#ffff00" stroke-width="2.400" shape-rendering="crispEdges"/></svg>
<div class="t" style="left:1543.5px;top:202.5px;font-size:15.5px;color:#f4f4f4;font-family:&quot;Liberation Sans&quot;,sans-serif;text-shadow:0 0 .6px #fff;"><span class="sx" style="transform:scaleX(0.9995)">Center</span></div>
<div class="t" style="left:1490px;top:224.5px;font-size:15.5px;color:#f4f4f4;font-family:&quot;Liberation Sans&quot;,sans-serif;text-shadow:0 0 .6px #fff;"><span class="sx" style="transform:scaleX(1.0057)">Left</span></div>
<div class="t" style="left:1608px;top:224.5px;font-size:15.5px;color:#f4f4f4;font-family:&quot;Liberation Sans&quot;,sans-serif;text-shadow:0 0 .6px #fff;"><span class="sx" style="transform:scaleX(1.0225)">Right</span></div>
<div class="pan" style="left:1456px;top:396px;width:214px;height:98.5px"><div class="h" style="top:10.0px"><span class="sx" style="transform:scaleX(0.9385)">Total Power</span></div><div class="x" style="left:188px;top:8px"></div><div class="r" style="top:38.0px;height:31.2px"><span class="sx" style="position:absolute;left:9px;top:6.5px;font-size:19.8px;transform:scaleX(1.1103)">-0.02 dBV rms</span></div><div class="r" style="top:68.2px;height:31.2px"><span class="sx" style="position:absolute;left:9px;top:6.5px;font-size:19.8px;transform:scaleX(1.1103)">-0.01 dBV rms</span></div></div>
<div class="pan" style="left:1457.5px;top:499px;width:214px;height:118.5px"><div class="h" style="top:9.8px"><span class="sx" style="transform:scaleX(0.9126)">Peak Frequency</span></div><div class="x" style="left:188px;top:7.5px"></div><div class="r" style="top:37.5px;height:41.5px"><span class="sx" style="position:absolute;left:5.5px;top:6.8px;font-size:31px;transform:scaleX(0.9983)">1000.488 Hz</span></div><div class="r" style="top:78.0px;height:41.5px"><span class="sx" style="position:absolute;left:5.5px;top:6.8px;font-size:31px;transform:scaleX(0.9983)">1000.488 Hz</span></div></div>
<div class="pan" style="left:1457px;top:620px;width:214.5px;height:133px"><div class="h" style="top:10.2px"><span class="sx" style="transform:scaleX(0.8790)">THD</span></div><div class="x" style="left:188.5px;top:8.5px"></div><div class="r" style="top:38.5px;height:48.2px"><span class="sx" style="position:absolute;left:5.5px;top:10.4px;font-size:35px;transform:scaleX(1.0170)">0.012275 %</span></div><div class="r" style="top:85.8px;height:48.2px"><span class="sx" style="position:absolute;left:5.5px;top:10.4px;font-size:35px;transform:scaleX(1.0170)">0.012050 %</span></div></div>
<div class="pan" style="left:1457px;top:759px;width:214.5px;height:128px"><div class="h" style="top:10.2px"><span class="sx" style="transform:scaleX(0.9597)">THD+N</span></div><div class="x" style="left:188.5px;top:8.5px"></div><div class="r" style="top:38.5px;height:45.8px"><span class="sx" style="position:absolute;left:5.5px;top:8.4px;font-size:32.6px;transform:scaleX(1.0229)">0.019689 %</span></div><div class="r" style="top:83.2px;height:45.8px"><span class="sx" style="position:absolute;left:5.5px;top:8.4px;font-size:32.6px;transform:scaleX(1.0229)">0.017698 %</span></div></div>
<div class="sp" style="left:7px;top:969.500px;width:148px">Running...</div>
<div class="sp" style="left:157px;top:969.500px;width:126px">Real Time</div>
<div class="sp" style="left:286px;top:969.500px;width:89px">192000 Hz</div>
<div class="sp" style="left:377px;top:969.500px;width:63px">16 Bit</div>
<div class="sp" style="left:443px;top:969.500px;width:64px">Stereo</div>
<div class="sp" style="left:509px;top:969.500px;width:127px">FFT 131072 pts</div>
<div class="sp" style="left:638px;top:969.500px;width:92px">Blackman</div>
<div class="sp" style="left:732px;top:969.500px;width:940px;border-top-color:#8a8a8a;border-left-color:#7a7a7a"></div>
<div class="a" style="left:735px;top:972px;width:630px;height:16px;background:#dcdcdc"></div>
<div class="a" style="left:735px;top:972px;width:630px;height:7px;background:linear-gradient(90deg,#00ff00 0,#08fb00 40%,#48ec00 62%,#86d800 82%,#a8cc00 100%)"></div>
<div class="a" style="left:735px;top:981px;width:630px;height:7px;background:linear-gradient(90deg,#00ff00 0,#08fb00 40%,#48ec00 62%,#86d800 82%,#a8cc00 100%)"></div>
<div class="a" style="left:735px;top:972px;width:630px;height:16px;background:repeating-linear-gradient(90deg,rgba(120,130,110,0) 0,rgba(120,130,110,0) 3.500px,rgba(118,132,112,.92) 3.500px,rgba(118,132,112,.92) 5px)"></div>
<div class="a" style="left:735px;top:979px;width:630px;height:2px;background:rgba(225,225,225,.8)"></div>
<div class="a" style="left:0;top:1000px;width:1680px;height:50px;background:linear-gradient(90deg,#9aa39c 0px,#a5a88e 60px,#a8a88c 100px,#ada08e 140px,#ad9c94 175px,#c8b0a8 200px,#e4c8bc 220px,#e8ccbf 245px,#ecd0bc 320px,#ecd0bc 504px,#ecccb8 800px,#e8ccb4 900px,#dcd0a8 940px,#dcd8a0 975px,#d4d4b4 1010px,#d4ccc4 1040px,#d8c8c4 1065px,#d8ccb8 1100px,#d8d4a0 1150px,#dcdc9c 1185px,#d8d8a0 1220px,#d8d0a8 1250px,#dcc8b8 1290px,#dcc8bc 1325px,#c8b4a8 1345px,#b4a098 1365px,#b8a490 1400px,#bca88c 1450px,#b8a888 1520px,#b5a684 1600px,#b2a380 1680px)"></div>
<div class="a" style="left:0;top:1000px;width:1680px;height:1.500px;background:rgba(255,255,255,.28)"></div>
<div class="tk" style="left:246px"></div>
<div class="tk" style="left:432.5px"></div>
<div class="tk" style="left:556.5px"></div>
<div class="tk" style="left:618.5px"></div>
<div class="tk" style="left:680.5px"></div>
<div class="tk" style="left:742.5px"></div>
<div class="a" style="left:744px;top:1002px;width:57px;height:46px;background:rgba(255,255,255,.32)"></div>
<div class="a" style="left:1661.500px;top:1001px;width:18.500px;height:49px;background:linear-gradient(160deg,rgba(150,140,120,.55),rgba(95,85,72,.55) 40%,rgba(120,108,92,.5));border-left:1px solid rgba(70,60,48,.85);box-shadow:inset 1.500px 1.500px 0 rgba(230,220,200,.45),inset -1px -1px 0 rgba(230,220,200,.35)"></div>
<svg class="a" style="left:16px;top:1011px" width="27.500" height="27.500" viewBox="0 0 30 30"><defs><linearGradient id="gc" x1="0" y1="0" x2="1" y2="1"><stop offset="0" stop-color="#1fd082"/><stop offset="1" stop-color="#0c8a60"/></linearGradient></defs>
<g fill="url(#gc)"><path d="M13.800 13.800h-7c-4 0-6-3-6-6 0-4 3-6.500 6.500-6.500 4 0 6.500 3 6.500 6.500z"/><path d="M16.200 13.800v-7c0-4 3-6 6-6 4 0 6.500 3 6.500 6.500 0 4-3 6.500-6.500 6.500z"/><path d="M13.800 16.200v7c0 4-3 6-6 6-4 0-6.500-3-6.500-6.500 0-4 3-6.500 6.500-6.500z"/><path d="M16.200 16.200h7c4 0 6 3 6 6 0 4-3 6.500-6.500 6.500-4 0-6.500-3-6.500-6.500z"/></g></svg>
<svg class="a" style="left:74px;top:1009px" width="34" height="34" viewBox="0 0 34 34"><defs>
<linearGradient id="cp1" x1="0" y1="0" x2="0" y2="1"><stop offset="0" stop-color="#2a7fff"/><stop offset=".45" stop-color="#28c8c8"/><stop offset=".75" stop-color="#9ad84a"/><stop offset="1" stop-color="#ffc21a"/></linearGradient>
<linearGradient id="cp2" x1="0" y1="0" x2="0" y2="1"><stop offset="0" stop-color="#b45cff"/><stop offset=".5" stop-color="#ff5aa8"/><stop offset="1" stop-color="#ff8a3a"/></linearGradient>
<linearGradient id="cp3" x1="0" y1="0" x2="1" y2="0"><stop offset="0" stop-color="#1aa0ff"/><stop offset="1" stop-color="#2a4fe0"/></linearGradient></defs>
<path d="M9.500 2.500c-2.500 0-4 1.500-5 4.500l-3 10c-1 3.500 0.500 6.500 4 6.500h4.500c2.500 0 4-1.500 5-4.500l4.500-14c0.500-1.500 0-2.500-1.500-2.500z" fill="url(#cp1)"/>
<path d="M11 2.500h9.500c3 0 4.500 2 5.500 5l1 3h-5c-1.500 0-2.500-1-3-2.500l-1-3c-0.500-1.500-1.500-2.500-3.500-2.500z" fill="url(#cp3)"/>
<path d="M21 10.500h6.500c3.500 0 5 3 4 6.500l-2.500 8c-1 3-2.500 4.500-5 4.500h-7c-2 0-3-1.500-2.500-3.500l3-11c0.500-2.500 1.500-4.500 3.500-4.500z" fill="url(#cp2)"/>
<rect x="10.500" y="22.300" width="20.500" height="8" rx="2" fill="#ffc20e"/>
<text x="20.800" y="29.200" font-family="Liberation Sans,sans-serif" font-weight="bold" font-size="7.600" text-anchor="middle" fill="#111" textLength="15" lengthAdjust="spacingAndGlyphs">PRE</text></svg>
<div class="a" style="left:135px;top:1019px;width:23px;height:20px;border-radius:2.500px;background:#2b2b2b"></div><div class="a" style="left:142px;top:1011px;width:24px;height:21px;border-radius:2.500px;background:linear-gradient(#fbfbfb,#e4e4e4);opacity:.9;box-shadow:0 0 2px rgba(0,0,0,.25)"></div><div class="a" style="left:142px;top:1019px;width:16px;height:13px;background:#aeaeae;border-radius:0 0 0 1px"></div>
<svg class="a" style="left:198px;top:1010px" width="32" height="30" viewBox="0 0 32 30"><path d="M1 4.500c0-1.500 1-2.500 2.500-2.500h7.500l3 3h14.500c1.500 0 2.500 1 2.500 2.500v19c0 1.500-1 2.500-2.500 2.500h-25c-1.500 0-2.500-1-2.500-2.500z" fill="#e8a400"/><path d="M1 8.500c0-1.500 1-2.500 2.500-2.500h9l2.500-1.500h13.500c1.500 0 2.500 1 2.500 2.500v19.500c0 1.500-1 2.500-2.500 2.500h-25c-1.500 0-2.500-1-2.500-2.500z" fill="#ffd24a"/><path d="M6.500 29v-7.500c0-1.500 1-2.500 2.500-2.500h14c1.500 0 2.500 1 2.500 2.500v7.500z" fill="#1683d8"/><rect x="10" y="22" width="12" height="1.800" fill="#0c5aa6"/></svg>
<svg class="a" style="left:261px;top:1010px" width="30" height="30" viewBox="-16 -16 32 32"><circle r="15.500" fill="#fff"/>
<path d="M0 0L-13.420 -7.750A15.500 15.500 0 0 1 13.420 -7.750z" fill="#ea4335"/>
<path d="M0 0L13.420 -7.750A15.500 15.500 0 0 1 0 15.500z" fill="#fbbc05"/>
<path d="M0 0L0 15.500A15.500 15.500 0 0 1 -13.420 -7.750z" fill="#34a853"/>
<path d="M-6.060 3.500L-13.420 -7.750L0 -7L13.420 -7.750L6.060 3.500L0 15.500z" fill="none"/>
<path d="M0 -7h13.800a15.500 15.500 0 0 0 -27.220 -.750l6.900 11.950z" fill="#ea4335"/>
<path d="M6.060 3.500l-6.900 11.950a15.500 15.500 0 0 0 14.640 -22.450h-13.800z" fill="#fbbc05"/>
<path d="M-6.060 3.500l-7.360 -11.250a15.500 15.500 0 0 0 12.580 23.200l6.900 -11.950z" fill="#34a853"/>
<circle r="7.200" fill="#fff"/><circle r="5.700" fill="#4285f4"/></svg>
<svg class="a" style="left:323px;top:1010px" width="30" height="30" viewBox="0 0 30 30"><rect width="30" height="30" fill="#fff"/><rect x="1" y="5.500" width="28" height="17.500" rx="1.500" fill="#222"/><rect x="1" y="9" width="28" height="9" fill="#3a3a3a"/><circle cx="9.500" cy="13.500" r="3" fill="#ddd"/><circle cx="20.500" cy="13.500" r="3" fill="#ddd"/><circle cx="9.500" cy="13.500" r="1.200" fill="#333"/><circle cx="20.500" cy="13.500" r="1.200" fill="#333"/></svg>
<svg class="a" style="left:385px;top:1010px" width="30" height="30" viewBox="0 0 30 30"><rect x=".7" y=".7" width="28.600" height="28.600" fill="#fff" stroke="#111" stroke-width="1.400"/><path d="M3.5 1v28M1 3.5h28M8.2 1v28M1 8.2h28M12.9 1v28M1 12.9h28M17.6 1v28M1 17.6h28M22.3 1v28M1 22.3h28M27.0 1v28M1 27.0h28" stroke="#777" stroke-width=".8"/>
<path d="M2 7l4-1 2 3 3-1 2 4 3 1 2-4 2 2 2 5 2 1 1 7" fill="none" stroke="#0a22ee" stroke-width="1.700"/><path d="M3 4l4-1 4 3 5 1 3-2 3 2 2 4" fill="none" stroke="#e11" stroke-width="1.300"/>
<text x="15" y="26.500" font-family="Liberation Serif,serif" font-style="italic" font-weight="bold" font-size="14.500" text-anchor="middle" fill="#000">SC</text></svg>
<svg class="a" style="left:695px;top:1010px" width="30" height="30" viewBox="0 0 30 30"><rect x=".7" y=".7" width="28.600" height="28.600" fill="#fff" stroke="#111" stroke-width="1.400"/><path d="M3.5 1v28M1 3.5h28M8.2 1v28M1 8.2h28M12.9 1v28M1 12.9h28M17.6 1v28M1 17.6h28M22.3 1v28M1 22.3h28M27.0 1v28M1 27.0h28" stroke="#777" stroke-width=".8"/>
<path d="M2 7l4-1 2 3 3-1 2 4 3 1 2-4 2 2 2 5 2 1 1 7" fill="none" stroke="#0a22ee" stroke-width="1.700"/><path d="M3 4l4-1 4 3 5 1 3-2 3 2 2 4" fill="none" stroke="#e11" stroke-width="1.300"/>
<text x="15" y="26.500" font-family="Liberation Serif,serif" font-style="italic" font-weight="bold" font-size="14.500" text-anchor="middle" fill="#000">SC</text></svg>
<svg class="a" style="left:449px;top:1012px" width="27" height="26" viewBox="0 0 27 26"><rect width="27" height="26" rx="4.500" fill="#b30b00"/><path d="M6 20.500c1.500-1.500 4.500-3.500 6.500-9c0.800-2.500 1-5.500-0.200-5.500c-1.500 0-1 3.500 0.500 6.500c1.500 3 4.500 5.500 7.500 5.500c2 0 1.500-2-1.500-2c-4 0-9 1.500-11.500 3.200c-2 1.300-2 2.300-1.300 1.300z" fill="none" stroke="#fff" stroke-width="1.500" stroke-linejoin="round"/></svg>
<svg class="a" style="left:509px;top:1010px" width="30" height="30" viewBox="0 0 30 30"><circle cx="15" cy="15" r="13" fill="#f8b400" stroke="#111" stroke-width="3.300"/><path d="M15 8.500l6.800 11.500h-13.600z" fill="none" stroke="#111" stroke-width="2.400" stroke-linejoin="round"/><path d="M11.500 18.500h7" stroke="#111" stroke-width="2"/></svg>
<svg class="a" style="left:571px;top:1010px" width="30" height="30" viewBox="-15 -15 30 30"><defs><radialGradient id="ut586" cx=".4" cy=".3" r=".8"><stop offset="0" stop-color="#8fd45a"/><stop offset="1" stop-color="#4f9a2e"/></radialGradient></defs><circle r="14.500" fill="url(#ut586)"/><path d="M-7.500 -7.500h4.500v9c0 2 1 3 3 3s3.500-1.500 3.500-3.500v-8.500h4.500v13h-4v-2c-1 1.800-2.800 2.800-5 2.800c-1.500 0-2.500-.4-3.200-1v7.500c-1.500-.3-2.800-1-3.800-1.800z" fill="#fff"/></svg>
<svg class="a" style="left:633px;top:1012px" width="29" height="25" viewBox="0 0 29 25"><rect x=".5" y=".5" width="28" height="24" rx="1.500" fill="#e9eef2" stroke="#c3ccd4"/><rect x="2" y="4" width="13" height="18" fill="#3f8f7f"/><rect x="2" y="4" width="13" height="18" fill="url(#gw)"/><defs><linearGradient id="gw" x1="0" y1="0" x2="1" y2="1"><stop offset="0" stop-color="#5a9ac8"/><stop offset="1" stop-color="#2f8f6f"/></linearGradient></defs><rect x="16.500" y="5" width="5" height="15" fill="#fff"/><rect x="23" y="5" width="2.300" height="8" fill="#3f9f8f"/><path d="M22 2h4" stroke="#99a" stroke-width="1"/></svg>
<svg class="a" style="left:756px;top:1010px" width="34" height="32" viewBox="0 0 34 32"><rect x="1.100" y="1.400" width="22" height="20" rx="2" fill="#e9edf2" opacity=".8"/><rect x="5" y="3.400" width="12.300" height="12.300" rx="2.500" fill="none" stroke="#d8381e" stroke-width="2.400" stroke-dasharray="3.300 2.200"/><path d="M6.900 17.600h13.500l5.500-1.600M18.300 7.100v12.500l-0.800 4.500" stroke="#98a2ae" stroke-width="2" fill="none"/><circle cx="27.800" cy="15.700" r="2.100" fill="none" stroke="#1d8fe0" stroke-width="1.600"/><circle cx="17.300" cy="26.200" r="2.100" fill="none" stroke="#1d8fe0" stroke-width="1.600"/></svg>
<div class="a" style="left:1374px;top:1021px;border:5px solid transparent;border-bottom:6px solid #111;border-top:0"></div>
<svg class="a" style="left:1400px;top:1014px" width="18" height="24" viewBox="0 0 18 24"><rect x="5.500" y="1" width="7" height="13" rx="3.500" fill="#111"/><path d="M2.500 10.500c0 4 3 6.500 6.500 6.500s6.500-2.500 6.500-6.500M9 17v4.500" fill="none" stroke="#111" stroke-width="1.500"/></svg>
<svg class="a" style="left:1428px;top:1016px" width="24" height="18" viewBox="0 0 24 18" fill="none" stroke="#111" stroke-width="1.400"><path d="M1.500 6.500h3.500l4.500-4v13l-4.500-4h-3.500z"/><path d="M12 6c1.200 1.800 1.200 4.200 0 6M15 3.500c2.300 3.200 2.300 7.800 0 11M18 1.500c3.300 4.500 3.300 10.500 0 15"/></svg>
<svg class="a" style="left:1460px;top:1015px" width="20" height="20" viewBox="-15 -15 30 30"><defs><radialGradient id="ut1470" cx=".4" cy=".3" r=".8"><stop offset="0" stop-color="#8fd45a"/><stop offset="1" stop-color="#4f9a2e"/></radialGradient></defs><circle r="14.500" fill="url(#ut1470)"/><path d="M-7.500 -7.500h4.500v9c0 2 1 3 3 3s3.500-1.500 3.500-3.500v-8.500h4.500v13h-4v-2c-1 1.800-2.800 2.800-5 2.800c-1.500 0-2.500-.4-3.200-1v7.500c-1.500-.3-2.800-1-3.800-1.800z" fill="#fff"/></svg>
<div class="t" style="left:1493.5px;top:1017.5px;font-size:15.5px;color:#111;font-family:&quot;Liberation Sans&quot;,sans-serif;"><span class="sx" style="transform:scaleX(0.8538)">РУС</span></div>
<div class="t" style="left:1555px;top:1006px;font-size:15.5px;color:#111;font-family:&quot;Liberation Sans&quot;,sans-serif;"><span class="sx" style="transform:scaleX(0.8766)">14:25</span></div>
<div class="t" style="left:1538px;top:1028.5px;font-size:15.5px;color:#111;font-family:&quot;Liberation Sans&quot;,sans-serif;"><span class="sx" style="transform:scaleX(0.9023)">03.12.2024</span></div>
<svg class="a" style="left:1628px;top:1014px" width="20" height="22" viewBox="0 0 20 22" fill="none" stroke="#111" stroke-width="1.400"><path d="M3 16c1.500-1.500 2-3 2-6.500c0-3.500 2-6 5-6s5 2.500 5 6c0 3.500 0.500 5 2 6.500z"/><path d="M7.500 18.500c0.500 1.200 1.500 1.700 2.500 1.700s2-0.500 2.500-1.700"/></svg>
</body></html>
